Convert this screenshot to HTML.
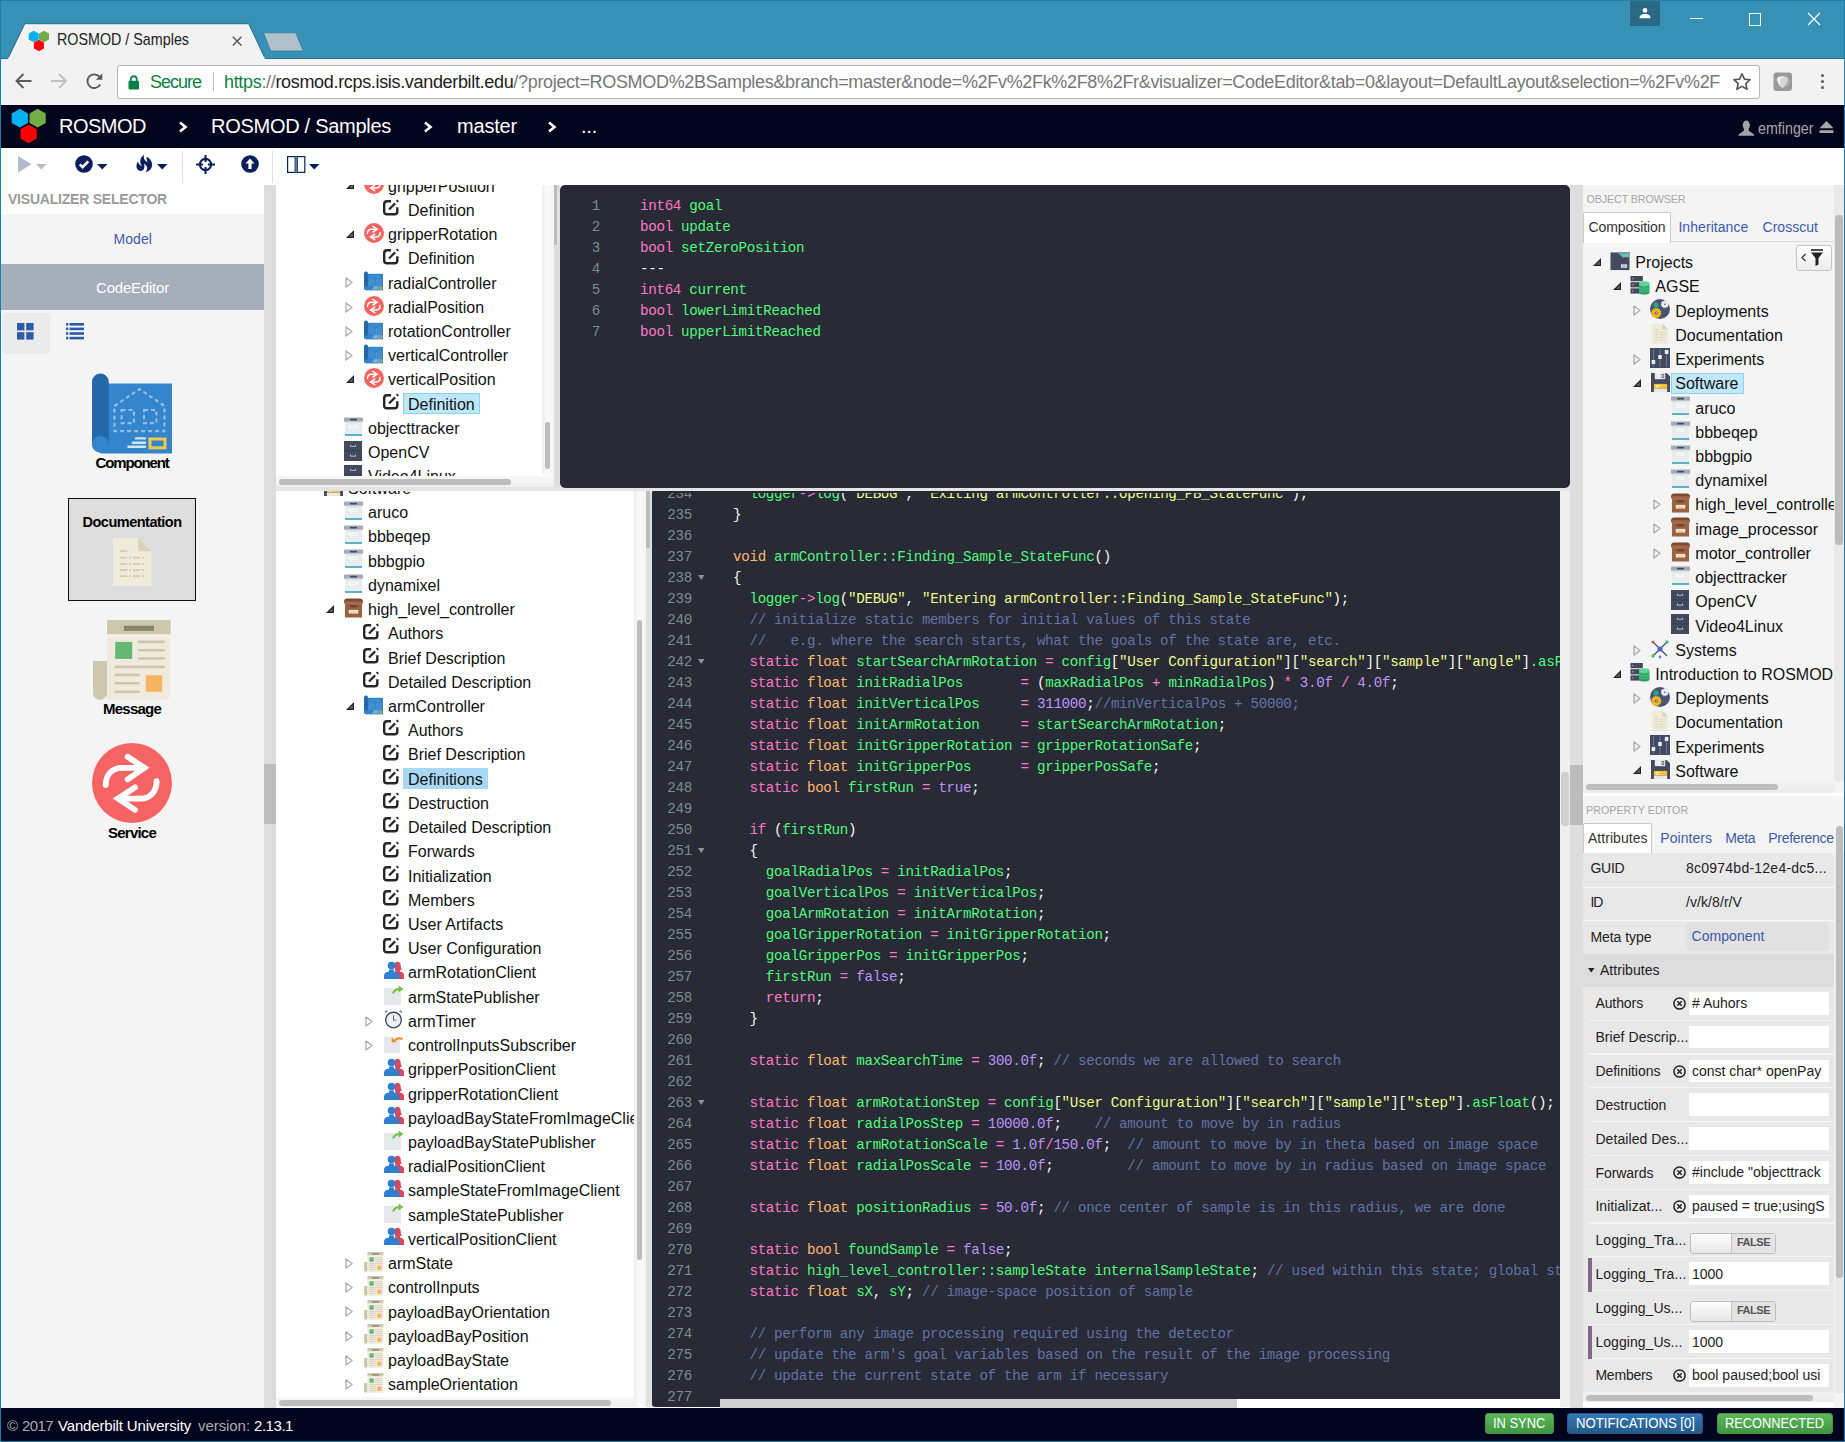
<!DOCTYPE html><html><head><meta charset="utf-8"><style>*{box-sizing:border-box}
body{margin:0;width:1845px;height:1442px;overflow:hidden;position:relative;font-family:"Liberation Sans",sans-serif;background:#fff;color:#000}
.a{position:absolute}
.t{position:absolute;white-space:nowrap}
svg.a{overflow:visible}
</style></head><body>
<svg width="0" height="0" style="position:absolute">
<defs>
<symbol id="svc" viewBox="0 0 20 20"><circle cx="10" cy="10" r="10" fill="#f56363"/><g fill="none" stroke="#fff" stroke-width="1.45" stroke-linecap="round" stroke-linejoin="miter"><path d="M3.42 10.47C3.42 8 5 6.2 7.5 6.2H13"/><path d="M8.9 3.45L13.1 6.2 8.9 9.1"/><path d="M16.15 9.55C16.15 12 14.6 13.9 12.2 13.9H6.8"/><path d="M10.75 11.08L6.5 13.9 10.75 16.7"/></g></symbol>
<symbol id="cmp" viewBox="0 0 20 20"><path d="M2.1 2.4H20V19.9H2.1z" fill="#3585cc"/><rect x="0" y="-.1" width="4.2" height="19.6" rx="2.1" fill="#2468aa"/><circle cx="2.1" cy="17.6" r="2.1" fill="#3585cc"/><path d="M5.6 8L11.9 3.75 18.1 8V14.3H5.6Z" fill="none" stroke="#8fbde8" stroke-width=".55" stroke-dasharray="1 .75"/><rect x="7.4" y="9" width="3.1" height="3.3" fill="none" stroke="#8fbde8" stroke-width=".55" stroke-dasharray="1 .75"/><rect x="13" y="9" width="3.1" height="3.3" fill="none" stroke="#8fbde8" stroke-width=".55" stroke-dasharray="1 .75"/><path d="M11 16.1h2.25M10.2 17.2h3.05M9.1 18.2h4.15" stroke="#d0e6fa" stroke-width=".6" stroke-linecap="round"/><rect x="14.5" y="16.25" width="3.75" height="2.2" fill="none" stroke="#f3c94a" stroke-width=".75"/></symbol>
<symbol id="def" viewBox="0 0 16 16"><path d="M8.3 2.1H4.6C3 2.1 2 3.1 2 4.7v6.8C2 13 3 14 4.6 14h6.8c1.6 0 2.6-1 2.6-2.6V7.6" fill="none" stroke="#262626" stroke-width="2.2"/><path d="M6.4 9.6l5.6-5.6" stroke="#262626" stroke-width="2"/><path d="M13.3 1l1.6 1.6" stroke="#262626" stroke-width="1.7"/></symbol>
<symbol id="pkg" viewBox="0 0 20 20"><rect x="0" y="0" width="20" height="4.6" rx=".6" fill="#a5aab2"/><rect x="6.2" y="1.2" width="7.6" height="2" rx="1" fill="#434a5e"/><rect x="1" y="4.6" width="18" height="13" fill="#e8edef"/><rect x="1" y="4.6" width="18" height=".8" fill="#d5dadd"/><rect x="5.5" y="7.8" width="9" height="3.6" fill="#fbfbfb"/><path d="M7 9.6h6" stroke="#d0d0d0" stroke-width=".5"/><rect x="1" y="17.5" width="18" height="1.8" fill="#40a8ba"/></symbol>
<symbol id="bpkg" viewBox="0 0 20 20"><path d="M.3 1.8Q.8 0 3 0h14q2.2 0 2.7 1.8L20 5H0z" fill="#7b4a2e"/><rect x="0" y="2.6" width="20" height="2.4" fill="#9a6143"/><rect x="1" y="5" width="18" height="15" fill="#9a6143"/><rect x="6" y="7.2" width="8" height="2" fill="#70412a"/><rect x="5" y="12" width="10" height="3.8" fill="#ece6c6"/><path d="M6.5 13.9h7" stroke="#c9c19a" stroke-width=".5"/></symbol>
<symbol id="cab" viewBox="0 0 18 20"><rect x="0" y="0" width="18" height="20" fill="#434a5e"/><path d="M6.5 3.8v1.6h5V3.8M6.5 13.6v1.6h5v-1.6" fill="none" stroke="#d5d8de" stroke-width=".8"/><path d="M0 9.9h18" stroke="#353b4b" stroke-width=".7"/></symbol>
<symbol id="cli" viewBox="0 0 20 20"><path d="M10.2 4.5C10.2 2 11.6.8 13.5.8s3.2 1.2 3.2 3.6c0 1.5.4 3.2 1.3 4.2-.8.5-1.5.6-2 .6v1.4c2.6.6 4 1.6 4 3.2V18h-7z" fill="#d24a63"/><circle cx="7.5" cy="4.6" r="3.8" fill="#2f80cf"/><path d="M5 8.5h5v2c3 .5 5 1.8 5 3.7V18H0v-3.8c0-1.9 2-3.2 5-3.7z" fill="#2f80cf"/></symbol>
<symbol id="pub" viewBox="0 0 20 20"><rect x="0" y="3" width="17" height="17" fill="#e5e9eb"/><path d="M9 8.5c1-3 3.5-4.5 7-4.5" fill="none" stroke="#76c045" stroke-width="2.2"/><path d="M14.5.5l5 3.5-5 3.5z" fill="#76c045"/></symbol>
<symbol id="sub" viewBox="0 0 20 20"><rect x="0" y="3" width="17" height="17" fill="#e5e9eb"/><path d="M19.5 5.5c-3-1.8-6.5-1-8.3 1.5" fill="none" stroke="#f08a1c" stroke-width="2.2"/><path d="M8 3.5v5.2h5.2z" fill="#f08a1c"/></symbol>
<symbol id="tmr" viewBox="0 0 20 20"><circle cx="10" cy="10.6" r="8.2" fill="#eef1f3" stroke="#3a4258" stroke-width="1.4"/><path d="M10 5.5v5.2h3" fill="none" stroke="#3a4258" stroke-width=".9"/><path d="M1 2.5l2.5-1.8M19 2.5l-2.5-1.8" stroke="#6d84c8" stroke-width="1.6"/></symbol>
<symbol id="msg" viewBox="0 0 20 20"><path d="M0 10.1H3.5V18.1a1.75 1.75 0 0 1-3.5 0z" fill="#cdc7ab"/><path d="M3.5 4.4H19.4V18.3a1.5 1.5 0 0 1-1.5 1.5H3.5z" fill="#eeebde"/><rect x="3.5" y="-.1" width="15.9" height="3.6" fill="#cdc7ab"/><rect x="7.7" y="1.3" width="7.55" height="1.3" fill="#8a8570"/><rect x="3.5" y="3.5" width="15.9" height=".9" fill="#f5f1e6"/><rect x="5.55" y="5.35" width="4.25" height="4.25" fill="#63b873"/><rect x="13.2" y="13.7" width="4.1" height="4.1" fill="#f6b463"/><path d="M11.5 5.35h6.2M11.5 7.45h6.2M11.5 9.5h6.2M5.65 11.6h12.05M5.65 13.6h5.75M5.65 15.7h5.75M5.65 17.8h5.75" stroke="#cdc7ab" stroke-width=".65" stroke-linecap="round"/></symbol>
<symbol id="flp" viewBox="0 0 20 20"><path d="M0 0h16.5L20 3.5V20H0z" fill="#434a5e"/><path d="M4 0h11v6.5H4z" fill="#e9ebee"/><rect x="11.2" y="1" width="2.6" height="4.2" fill="#434a5e"/><rect x="11.9" y="1.6" width="1.2" height="3" fill="#e9ebee"/><rect x="3" y="11.5" width="14" height="5" fill="#f0c12e"/><path d="M5 13.3h5M5 14.9h3" stroke="#fff" stroke-width=".9"/><rect x="3" y="16.5" width="14" height="3.5" fill="#e6e8ea"/></symbol>
<symbol id="prj" viewBox="0 0 20 20"><rect x="0" y=".5" width="20" height="18.5" fill="#454c61"/><path d="M7.5 .5H20V5.6H12.6Z" fill="#6cc49c"/><path d="M7.5 .5H20V1.9H8.9Z" fill="#7087c8"/><rect x="11" y="13" width="6.5" height="3.6" fill="#dde4ee"/><rect x="12" y="14.2" width="4.5" height="1.3" fill="#8fa3cf"/></symbol>
<symbol id="srv" viewBox="0 0 20 20"><rect x="0" y="0" width="13" height="5.5" fill="#434a5b"/><rect x="0" y="6.5" width="13" height="5.5" fill="#434a5b"/><rect x="0" y="13" width="13" height="5.5" fill="#434a5b"/><circle cx="2.5" cy="2.7" r=".8" fill="#a6b0c4"/><circle cx="2.5" cy="9.2" r=".8" fill="#a6b0c4"/><circle cx="2.5" cy="15.7" r=".8" fill="#a6b0c4"/><ellipse cx="14.5" cy="17" rx="5.5" ry="2.5" fill="#2e9c63"/><rect x="9" y="8" width="11" height="9" fill="#3fb877"/><ellipse cx="14.5" cy="8" rx="5.5" ry="2.5" fill="#5fd39a"/><path d="M9 11.5q5.5 2 11 0M9 14.5q5.5 2 11 0" fill="none" stroke="#2e9c63" stroke-width=".7"/></symbol>
<symbol id="gear" viewBox="0 0 20 20"><circle cx="10" cy="10" r="10" fill="#4a5470"/><circle cx="14.8" cy="5.2" r="3.3" fill="#e9ecef" stroke="#e9ecef" stroke-width="1.4" stroke-dasharray=".9 .9"/><circle cx="14.8" cy="5.2" r=".8" fill="#4a5470"/><circle cx="6" cy="6" r="2.2" fill="#1fae8f" stroke="#1fae8f" stroke-width="1.4" stroke-dasharray=".9 .9"/><circle cx="6.2" cy="14" r="4.6" fill="#f0b81c" stroke="#f0b81c" stroke-width="1.3" stroke-dasharray="1 1"/><circle cx="6.2" cy="14" r="1.6" fill="#4a5470"/><circle cx="6.2" cy="14" r=".7" fill="#e9ecef"/></symbol>
<symbol id="doc" viewBox="0 0 16 20"><path d="M0 0H10.5L16 5.5V20H0z" fill="#efebdb"/><path d="M10.5 0V5.5H16z" fill="#d8d1b3"/><path d="M2.9 5.5h4M2.9 8.2h10.4M2.9 10.75h10.4M2.9 13.4h10.4M2.9 15.9h10.4" stroke="#d3cca9" stroke-width=".75" stroke-dasharray="3 .8 .8 .8"/></symbol>
<symbol id="exp" viewBox="0 0 20 20"><rect x="0" y="0" width="20" height="20" fill="#434a5e"/><path d="M3.4 1v18M10 1v18M16.6 1v18" stroke="#7487d0" stroke-width=".8"/><rect x="1.6" y="12" width="3.6" height="4" fill="#e8ecef"/><rect x="8.2" y="7" width="3.6" height="4" fill="#e8ecef"/><rect x="14.8" y="2" width="3.6" height="4" fill="#e8ecef"/></symbol>
<symbol id="sysi" viewBox="0 0 20 20"><path d="M3 3l14 14M17 3L3 17" stroke="#434a5b" stroke-width="1.2"/><circle cx="10" cy="10" r="2.6" fill="#4a66c8"/><circle cx="3" cy="3" r="1.5" fill="#e05050"/><circle cx="17" cy="3" r="1.8" fill="#4fc27a"/><circle cx="3" cy="17" r="1.8" fill="#4fc27a"/><circle cx="10" cy="18" r="1.4" fill="#6a7ed0"/></symbol>
<symbol id="tex" viewBox="0 0 8 8"><path d="M8 0v8H0z" fill="#222"/><path d="M6.8 3v3.8H3z" fill="#666"/></symbol>
<symbol id="tcol" viewBox="0 0 8 11"><path d="M1 1l6 4.5L1 10z" fill="none" stroke="#aaa" stroke-width="1.3" stroke-linejoin="round"/></symbol>
</defs></svg>
<div class="a" style="left:0px;top:0px;width:1845px;height:59px;background:#3791b5"></div>
<div class="a" style="left:0px;top:58px;width:1845px;height:1px;background:#24708f"></div>
<svg class="a" style="left:0px;top:0px;" width="320" height="60" viewBox="0 0 320 60"><path d="M7.5 59.5L24.8 23.7H248.7L265.5 59.5" fill="#f2f2f2" stroke="#1f6f90" stroke-width="1"/><rect x="8.5" y="57" width="256" height="3" fill="#f2f2f2"/><path d="M270.7 51L263.5 32.8H295.7L303.3 51Z" fill="#aec0c8" stroke="#2f7fa0" stroke-width=".8"/></svg>
<svg class="a" style="left:26px;top:29px;" width="26" height="24" viewBox="0 0 26 24"><polygon points="12.77,10.40 7.75,13.30 2.73,10.40 2.73,4.60 7.75,1.70 12.77,4.60" fill="#03b0f0"/><polygon points="23.02,10.40 18.00,13.30 12.98,10.40 12.98,4.60 18.00,1.70 23.02,4.60" fill="#70ad47"/><polygon points="17.92,19.40 12.90,22.30 7.88,19.40 7.88,13.60 12.90,10.70 17.92,13.60" fill="#ff0000"/></svg>
<div class="t" style="left:57.00px;top:28.11px;font-size:17px;line-height:24px;color:#222;transform:scaleX(0.8418);transform-origin:0 0;">ROSMOD / Samples</div>
<svg class="a" style="left:232px;top:36px;" width="10" height="10" viewBox="0 0 10 10"><path d="M.8 .8l8.6 8.6M9.4 .8L.8 9.4" stroke="#555" stroke-width="1.4"/></svg>
<div class="a" style="left:1630px;top:1px;width:30px;height:25px;background:#2a6a86"></div>
<svg class="a" style="left:1638px;top:7px;" width="14" height="14" viewBox="0 0 14 14"><circle cx="7" cy="3.4" r="2.3" fill="#fff"/><path d="M1.5 11.2c0-3 2.5-4.2 5.5-4.2s5.5 1.2 5.5 4.2z" fill="#fff"/></svg>
<div class="a" style="left:1690px;top:18px;width:13px;height:1.3px;background:#fff"></div>
<div class="a" style="left:1748.5px;top:13px;width:12.5px;height:12.5px;border:1.2px solid #fff"></div>
<svg class="a" style="left:1807px;top:12px;" width="14" height="14" viewBox="0 0 14 14"><path d="M1 1l12 12M13 1L1 13" stroke="#fff" stroke-width="1.2"/></svg>
<div class="a" style="left:0px;top:59px;width:1845px;height:46px;background:#f2f2f2"></div>
<svg class="a" style="left:14px;top:72px;" width="20" height="18" viewBox="0 0 20 18"><path d="M17.5 9H3M9.5 2L2.5 9l7 7" fill="none" stroke="#5a5a5a" stroke-width="1.9"/></svg>
<svg class="a" style="left:49px;top:72px;" width="20" height="18" viewBox="0 0 20 18"><path d="M2 9h14.5M10 2l7 7-7 7" fill="none" stroke="#c2c2c2" stroke-width="1.9"/></svg>
<svg class="a" style="left:85px;top:72px;" width="20" height="19" viewBox="0 0 20 19"><path d="M15.2 12.5A6.8 6.8 0 1 1 14.6 5" fill="none" stroke="#5a5a5a" stroke-width="1.9"/><path d="M17.3 1.2v6.5h-6.5z" fill="#5a5a5a"/></svg>
<div class="a" style="left:116.5px;top:64.5px;width:1643px;height:34px;background:#fff;border:1px solid #b6b6b6;border-radius:3px"></div>
<svg class="a" style="left:128px;top:75px;" width="12" height="15" viewBox="0 0 12 15"><rect x="0.5" y="5.8" width="10.5" height="8.7" rx="1" fill="#0b8043"/><path d="M2.8 6V4.2a2.95 2.95 0 0 1 5.9 0V6" fill="none" stroke="#0b8043" stroke-width="1.8"/></svg>
<div class="t" style="left:150.00px;top:69.76px;font-size:18px;line-height:25px;color:#0b8043;letter-spacing:-1.006px;">Secure</div>
<div class="a" style="left:213px;top:72px;width:1px;height:19px;background:#bbb"></div>
<div class="t" style="left:224.00px;top:69.76px;font-size:18px;line-height:25px;color:#777;letter-spacing:-0.329px;"><span style="color:#0b8043">https</span><span style="color:#777">://</span><span style="color:#222">rosmod.rcps.isis.vanderbilt.edu</span><span style="color:#777">/?project=ROSMOD%2BSamples&amp;branch=master&amp;node=%2Fv%2Fk%2F8%2Fr&amp;visualizer=CodeEditor&amp;tab=0&amp;layout=DefaultLayout&amp;selection=%2Fv%2F</span></div>
<svg class="a" style="left:1732px;top:72px;" width="20" height="20" viewBox="0 0 20 20"><path d="M10 1.8l2.4 5.3 5.8.6-4.4 3.9 1.3 5.7L10 14.4l-5.1 2.9 1.3-5.7L1.8 7.7l5.8-.6z" fill="none" stroke="#555" stroke-width="1.6" stroke-linejoin="round"/></svg>
<svg class="a" style="left:1773px;top:72px;" width="20" height="20" viewBox="0 0 20 20"><rect x="0.5" y="0.5" width="18.5" height="18.5" rx="3" fill="#9a9a9a"/><path d="M4 6c2-2.5 9-2.5 11 0 0 5-3 8-5.5 10C7 14 4 11 4 6z" fill="#eee"/><circle cx="12" cy="10" r="5" fill="#bbb" opacity=".5"/></svg>
<div class="a" style="left:1820.5px;top:73.9px;width:3.3px;height:3.3px;background:#5a5a5a;border-radius:50%"></div>
<div class="a" style="left:1820.5px;top:79.9px;width:3.3px;height:3.3px;background:#5a5a5a;border-radius:50%"></div>
<div class="a" style="left:1820.5px;top:85.9px;width:3.3px;height:3.3px;background:#5a5a5a;border-radius:50%"></div>
<div class="a" style="left:0px;top:105px;width:1845px;height:42.5px;background:#03041e"></div>
<div class="a" style="left:0px;top:146.5px;width:1845px;height:1px;background:#000"></div>
<svg class="a" style="left:9px;top:107px;" width="42" height="40" viewBox="0 0 42 40"><polygon points="18.94,15.90 10.80,20.60 2.66,15.90 2.66,6.50 10.80,1.80 18.94,6.50" fill="#03b0f0"/><polygon points="36.74,15.90 28.60,20.60 20.46,15.90 20.46,6.50 28.60,1.80 36.74,6.50" fill="#70ad47"/><polygon points="27.74,31.60 19.60,36.30 11.46,31.60 11.46,22.20 19.60,17.50 27.74,22.20" fill="#ff0000"/></svg>
<div class="t" style="left:59.00px;top:112.07px;font-size:20px;line-height:28px;color:#fff;letter-spacing:-0.500px;">ROSMOD</div>
<svg class="a" style="left:178px;top:121px;" width="10" height="12" viewBox="0 0 10 12"><path d="M2 1.5l5.5 4.5L2 10.5" fill="none" stroke="#fff" stroke-width="2.6"/></svg>
<svg class="a" style="left:423px;top:121px;" width="10" height="12" viewBox="0 0 10 12"><path d="M2 1.5l5.5 4.5L2 10.5" fill="none" stroke="#fff" stroke-width="2.6"/></svg>
<svg class="a" style="left:547px;top:121px;" width="10" height="12" viewBox="0 0 10 12"><path d="M2 1.5l5.5 4.5L2 10.5" fill="none" stroke="#fff" stroke-width="2.6"/></svg>
<div class="t" style="left:211.00px;top:112.07px;font-size:20px;line-height:28px;color:#fff;letter-spacing:-0.280px;">ROSMOD / Samples</div>
<div class="t" style="left:457.00px;top:112.07px;font-size:20px;line-height:28px;color:#fff;letter-spacing:-0.188px;">master</div>
<div class="t" style="left:581.00px;top:112.07px;font-size:20px;line-height:28px;color:#fff;letter-spacing:-0.223px;">...</div>
<svg class="a" style="left:1738px;top:119.5px;" width="17" height="16" viewBox="0 0 17 16"><ellipse cx="8.3" cy="5.2" rx="3.6" ry="4.6" fill="#a3a3a3"/><path d="M5.8 8.8h5v2l5.4 3.6v1.3H.5v-1.3l5.3-3.6z" fill="#a3a3a3"/></svg>
<div class="t" style="left:1758.30px;top:117.11px;font-size:17px;line-height:24px;color:#a8a8a8;transform:scaleX(0.8391);transform-origin:0 0;">emfinger</div>
<svg class="a" style="left:1818.5px;top:121px;" width="15" height="13" viewBox="0 0 15 13"><path d="M7.5 0L14.5 7.2H.5z" fill="#a8a8a8"/><rect x=".5" y="9.2" width="14" height="2.8" rx=".6" fill="#a8a8a8"/></svg>
<div class="a" style="left:0px;top:147.5px;width:1845px;height:37.5px;background:#fff"></div>
<svg class="a" style="left:18px;top:156px;" width="14" height="17" viewBox="0 0 14 17"><path d="M0 0L13.5 8.2 0 16.5z" fill="#b3bbcb"/></svg>
<svg class="a" style="left:36px;top:164px;" width="11" height="6" viewBox="0 0 11 6"><path d="M0 0h10.5L5.25 5.5z" fill="#b3bbcb"/></svg>
<svg class="a" style="left:75px;top:155px;" width="18" height="18" viewBox="0 0 18 18"><circle cx="9" cy="9" r="8.8" fill="#0b1f5c"/><path d="M4.8 9.3l2.8 2.8 5.6-5.8" fill="none" stroke="#fff" stroke-width="2.6"/></svg>
<svg class="a" style="left:97px;top:164px;" width="11" height="6" viewBox="0 0 11 6"><path d="M0 0h10.5L5.25 5.5z" fill="#0b1f5c"/></svg>
<svg class="a" style="left:135.6px;top:154.3px;" width="17" height="19" viewBox="0 0 17 19"><path d="M7.96 .58C5.5 2.5 3.8 5.5 4.3 8.5 4.6 10.2 5.5 11.3 6.2 11.9 4.5 11.8 2.8 10.5 1.94 7.57 .2 10-.2 13.5 1.6 15.6 3.2 17.5 6.2 17.6 7.6 15.6 8.6 14 8.5 11.5 8.1 9.8 9.8 11 11.3 12.5 11.2 14.2 11.1 16 10.2 17.4 9.1 18.1 13.5 17.5 16.3 14.5 16.1 10.3 15.9 6.8 13.5 4 10.7 2.7 10.2 4.5 11 6.8 11.8 8.4 10 7.5 8.4 6.2 7.9 4.3 7.6 2.9 7.7 1.6 7.96 .58Z" fill="#0b1f5c"/></svg>
<svg class="a" style="left:157px;top:164px;" width="11" height="6" viewBox="0 0 11 6"><path d="M0 0h10.5L5.25 5.5z" fill="#0b1f5c"/></svg>
<div class="a" style="left:181.5px;top:151px;width:1px;height:31.5px;background:#dde2ea"></div>
<svg class="a" style="left:196px;top:155px;" width="19" height="19" viewBox="0 0 19 19"><circle cx="9.5" cy="9.5" r="5.6" fill="none" stroke="#0b1f5c" stroke-width="2.1"/><path d="M9.5 0v7M9.5 12v7M0 9.5h7M12 9.5h7" stroke="#0b1f5c" stroke-width="2.1"/></svg>
<svg class="a" style="left:241px;top:155px;" width="18" height="18" viewBox="0 0 18 18"><circle cx="9" cy="9" r="8.8" fill="#0b1f5c"/><path d="M9 3.5L13.5 8.5H10.6V14H7.4V8.5H4.5z" fill="#fff"/></svg>
<div class="a" style="left:272px;top:151px;width:1px;height:31.5px;background:#dde2ea"></div>
<svg class="a" style="left:286.8px;top:155.7px;" width="19" height="17" viewBox="0 0 19 17"><rect x=".6" y=".6" width="7.6" height="15.8" fill="none" stroke="#0b1f5c" stroke-width="1.2"/><rect x="10.2" y=".6" width="7.6" height="15.8" fill="none" stroke="#0b1f5c" stroke-width="1.2"/><path d="M9.2 0v17" stroke="#4a7fa8" stroke-width="1.6"/></svg>
<svg class="a" style="left:309px;top:164px;" width="11" height="6" viewBox="0 0 11 6"><path d="M0 0h10.5L5.25 5.5z" fill="#0b1f5c"/></svg>
<div class="a" style="left:0px;top:1407.5px;width:1845px;height:35px;background:#03041e"></div>
<div class="t" style="left:7.00px;top:1415.30px;font-size:15px;line-height:21px;color:#aaa;letter-spacing:1.948px;">©</div>
<div class="t" style="left:22.00px;top:1415.30px;font-size:15px;line-height:21px;color:#aaa;letter-spacing:-0.593px;">2017</div>
<div class="t" style="left:58.00px;top:1415.30px;font-size:15px;line-height:21px;color:#fff;letter-spacing:-0.164px;">Vanderbilt University</div>
<div class="t" style="left:198.00px;top:1415.30px;font-size:15px;line-height:21px;color:#aaa;letter-spacing:-0.065px;">version:</div>
<div class="t" style="left:254.00px;top:1415.30px;font-size:15px;line-height:21px;color:#fff;letter-spacing:-0.451px;">2.13.1</div>
<div class="a" style="left:1484.6px;top:1413.4px;width:69.4px;height:20.4px;background:linear-gradient(#5cb85c,#419641);border:1px solid #419641;border-radius:3px"></div>
<div class="t" style="left:1493.30px;top:1412.20px;font-size:15px;line-height:21px;color:#fff;transform:scaleX(0.8612);transform-origin:0 0;">IN SYNC</div>
<div class="a" style="left:1567.4px;top:1413.4px;width:136px;height:20.4px;background:linear-gradient(#337ab7,#265a88);border:1px solid #265a88;border-radius:3px"></div>
<div class="t" style="left:1576.10px;top:1412.20px;font-size:15px;line-height:21px;color:#fff;transform:scaleX(0.8778);transform-origin:0 0;">NOTIFICATIONS [0]</div>
<div class="a" style="left:1716.5px;top:1413.4px;width:116px;height:20.4px;background:linear-gradient(#5cb85c,#419641);border:1px solid #419641;border-radius:3px"></div>
<div class="t" style="left:1725.20px;top:1412.20px;font-size:15px;line-height:21px;color:#fff;transform:scaleX(0.8546);transform-origin:0 0;">RECONNECTED</div>
<div class="a" style="left:0px;top:185px;width:264px;height:1222.5px;background:#f4f4f4"></div>
<div class="a" style="left:0px;top:185px;width:264px;height:29px;background:#fff"></div>
<div class="t" style="left:8.00px;top:189.15px;font-size:14px;line-height:20px;color:#9a9a9a;font-weight:bold;letter-spacing:-0.216px;">VISUALIZER SELECTOR</div>
<div class="t" style="left:113.50px;top:228.85px;font-size:14px;line-height:20px;color:#3f5ba9;letter-spacing:0.073px;">Model</div>
<div class="a" style="left:0px;top:264px;width:264px;height:46px;background:#a6aebc"></div>
<div class="t" style="left:96.00px;top:277.30px;font-size:15px;line-height:21px;color:#fff;letter-spacing:-0.205px;">CodeEditor</div>
<div class="a" style="left:2.5px;top:313px;width:47.5px;height:40.5px;background:#ebebeb;border-radius:3px"></div>
<svg class="a" style="left:17px;top:323px;" width="17" height="17" viewBox="0 0 17 17"><rect x="0" y="0" width="7.4" height="7.4" fill="#2d5aa9"/><rect x="9.2" y="0" width="7.4" height="7.4" fill="#2d5aa9"/><rect x="0" y="9.2" width="7.4" height="7.4" fill="#2d5aa9"/><rect x="9.2" y="9.2" width="7.4" height="7.4" fill="#2d5aa9"/></svg>
<svg class="a" style="left:66px;top:323px;" width="19" height="17" viewBox="0 0 19 17"><rect x="0" y="0" width="2.3" height="2.6" fill="#2d5aa9"/><rect x="0" y="4.6" width="2.3" height="2.6" fill="#2d5aa9"/><rect x="0" y="9.2" width="2.3" height="2.6" fill="#2d5aa9"/><rect x="0" y="13.8" width="2.3" height="2.6" fill="#2d5aa9"/><rect x="3.5" y="0" width="14.5" height="2.6" fill="#2d5aa9"/><rect x="3.5" y="4.6" width="14.5" height="2.6" fill="#2d5aa9"/><rect x="3.5" y="9.2" width="14.5" height="2.6" fill="#2d5aa9"/><rect x="3.5" y="13.8" width="14.5" height="2.6" fill="#2d5aa9"/></svg>
<svg class="a" style="left:92px;top:373px;" width="80" height="82"><use href="#cmp"/></svg>
<div class="t" style="left:95.50px;top:452.00px;font-size:15px;line-height:21px;color:#000;font-weight:bold;letter-spacing:-1.147px;">Component</div>
<div class="a" style="left:68px;top:498px;width:128px;height:103px;background:#dedede;border:1.3px solid #111"></div>
<div class="t" style="left:82.50px;top:511.98px;font-size:14.5px;line-height:20px;color:#000;font-weight:bold;letter-spacing:-0.502px;">Documentation</div>
<svg class="a" style="left:112.5px;top:536.6px;" width="38.5" height="50"><use href="#doc"/></svg>
<svg class="a" style="left:93px;top:620px;" width="80" height="81"><use href="#msg"/></svg>
<div class="t" style="left:103.00px;top:698.30px;font-size:15px;line-height:21px;color:#000;font-weight:bold;letter-spacing:-0.767px;">Message</div>
<svg class="a" style="left:92px;top:742.5px;" width="80" height="80"><use href="#svc"/></svg>
<div class="t" style="left:108.00px;top:822.30px;font-size:15px;line-height:21px;color:#000;font-weight:bold;letter-spacing:-0.769px;">Service</div>
<div class="a" style="left:264px;top:185px;width:12px;height:1222.5px;background:#dcdcdc"></div>
<div class="a" style="left:264px;top:764px;width:11.5px;height:60px;background:#bcbcbc"></div>
<div class="a" style="left:276px;top:185px;width:266px;height:291px;overflow:hidden;background:#fff">
<svg class="a" style="left:69.7px;top:-3.7999999999999945px;" width="8" height="8"><use href="#tex"/></svg>
<svg class="a" style="left:87.5px;top:-10.599999999999994px;" width="20" height="20"><use href="#svc"/></svg>
<div class="t" style="left:112.00px;top:-9.34px;font-size:16px;line-height:22px;color:#111;">gripperPosition</div>
<svg class="a" style="left:105.8px;top:14.072000000000013px;" width="17.5" height="17.5"><use href="#def"/></svg>
<div class="t" style="left:132.00px;top:14.88px;font-size:16px;line-height:22px;color:#111;">Definition</div>
<svg class="a" style="left:69.7px;top:44.64399999999999px;" width="8" height="8"><use href="#tex"/></svg>
<svg class="a" style="left:87.5px;top:37.843999999999994px;" width="20" height="20"><use href="#svc"/></svg>
<div class="t" style="left:112.00px;top:39.10px;font-size:16px;line-height:22px;color:#111;">gripperRotation</div>
<svg class="a" style="left:105.8px;top:62.516000000000034px;" width="17.5" height="17.5"><use href="#def"/></svg>
<div class="t" style="left:132.00px;top:63.32px;font-size:16px;line-height:22px;color:#111;">Definition</div>
<svg class="a" style="left:69.4px;top:92.28800000000001px;" width="8" height="11"><use href="#tcol"/></svg>
<svg class="a" style="left:87.5px;top:86.28800000000001px;" width="19" height="20"><use href="#cmp"/></svg>
<div class="t" style="left:112.00px;top:87.54px;font-size:16px;line-height:22px;color:#111;">radialController</div>
<svg class="a" style="left:69.4px;top:116.50999999999999px;" width="8" height="11"><use href="#tcol"/></svg>
<svg class="a" style="left:87.5px;top:110.50999999999999px;" width="20" height="20"><use href="#svc"/></svg>
<div class="t" style="left:112.00px;top:111.77px;font-size:16px;line-height:22px;color:#111;">radialPosition</div>
<svg class="a" style="left:69.4px;top:140.73199999999997px;" width="8" height="11"><use href="#tcol"/></svg>
<svg class="a" style="left:87.5px;top:134.73199999999997px;" width="19" height="20"><use href="#cmp"/></svg>
<div class="t" style="left:112.00px;top:135.99px;font-size:16px;line-height:22px;color:#111;">rotationController</div>
<svg class="a" style="left:69.4px;top:164.954px;" width="8" height="11"><use href="#tcol"/></svg>
<svg class="a" style="left:87.5px;top:158.954px;" width="19" height="20"><use href="#cmp"/></svg>
<div class="t" style="left:112.00px;top:160.21px;font-size:16px;line-height:22px;color:#111;">verticalController</div>
<svg class="a" style="left:69.7px;top:189.97600000000006px;" width="8" height="8"><use href="#tex"/></svg>
<svg class="a" style="left:87.5px;top:183.17600000000004px;" width="20" height="20"><use href="#svc"/></svg>
<div class="t" style="left:112.00px;top:184.43px;font-size:16px;line-height:22px;color:#111;">verticalPosition</div>
<svg class="a" style="left:105.8px;top:207.848px;" width="17.5" height="17.5"><use href="#def"/></svg>
<div class="a" style="left:127.4px;top:207.79800000000003px;width:76.905px;height:21px;background:#bde8fb;border:1px solid #88cff0"></div>
<div class="t" style="left:132.00px;top:208.65px;font-size:16px;line-height:22px;color:#111;">Definition</div>
<svg class="a" style="left:68px;top:231.62px;" width="19" height="20"><use href="#pkg"/></svg>
<div class="t" style="left:92.00px;top:232.88px;font-size:16px;line-height:22px;color:#111;">objecttracker</div>
<svg class="a" style="left:68px;top:255.84199999999998px;" width="18" height="20"><use href="#cab"/></svg>
<div class="t" style="left:92.00px;top:257.10px;font-size:16px;line-height:22px;color:#111;">OpenCV</div>
<svg class="a" style="left:68px;top:280.06399999999996px;" width="18" height="20"><use href="#cab"/></svg>
<div class="t" style="left:92.00px;top:281.32px;font-size:16px;line-height:22px;color:#111;">Video4Linux</div>
</div>
<div class="a" style="left:276px;top:476px;width:278px;height:11.5px;background:linear-gradient(#f7f7f7,#eeeeee)"></div>
<div class="a" style="left:279px;top:478.8px;width:232px;height:6px;background:#bdbdbd;border-radius:3px"></div>
<div class="a" style="left:542px;top:185px;width:12px;height:290px;background:linear-gradient(90deg,#eeeeee,#fafafa 40%,#f4f4f4)"></div>
<div class="a" style="left:544.5px;top:422px;width:5.5px;height:47px;background:#bdbdbd;border-radius:3px"></div>
<div class="a" style="left:554px;top:185px;width:6px;height:302.5px;background:#dedede"></div>
<div class="a" style="left:554px;top:185px;width:3.2px;height:59.7px;background:#bcbcbc"></div>
<div class="a" style="left:276px;top:491.3px;width:358px;height:905.5px;overflow:hidden;background:#fff">
<svg class="a" style="left:47.5px;top:-14.0px;" width="19" height="19"><use href="#flp"/></svg>
<div class="t" style="left:72.00px;top:-13.24px;font-size:16px;line-height:22px;color:#111;">Software</div>
<svg class="a" style="left:68px;top:9.72199999999998px;" width="19" height="20"><use href="#pkg"/></svg>
<div class="t" style="left:92.00px;top:10.98px;font-size:16px;line-height:22px;color:#111;">aruco</div>
<svg class="a" style="left:68px;top:33.94400000000002px;" width="19" height="20"><use href="#pkg"/></svg>
<div class="t" style="left:92.00px;top:35.20px;font-size:16px;line-height:22px;color:#111;">bbbeqep</div>
<svg class="a" style="left:68px;top:58.166px;" width="19" height="20"><use href="#pkg"/></svg>
<div class="t" style="left:92.00px;top:59.42px;font-size:16px;line-height:22px;color:#111;">bbbgpio</div>
<svg class="a" style="left:68px;top:82.38799999999998px;" width="19" height="20"><use href="#pkg"/></svg>
<div class="t" style="left:92.00px;top:83.64px;font-size:16px;line-height:22px;color:#111;">dynamixel</div>
<svg class="a" style="left:49.7px;top:113.41000000000007px;" width="8" height="8"><use href="#tex"/></svg>
<svg class="a" style="left:68px;top:106.61000000000007px;" width="19" height="20"><use href="#bpkg"/></svg>
<div class="t" style="left:92.00px;top:107.87px;font-size:16px;line-height:22px;color:#111;">high_level_controller</div>
<svg class="a" style="left:85.8px;top:131.28200000000004px;" width="17.5" height="17.5"><use href="#def"/></svg>
<div class="t" style="left:112.00px;top:132.09px;font-size:16px;line-height:22px;color:#111;">Authors</div>
<svg class="a" style="left:85.8px;top:155.50400000000002px;" width="17.5" height="17.5"><use href="#def"/></svg>
<div class="t" style="left:112.00px;top:156.31px;font-size:16px;line-height:22px;color:#111;">Brief Description</div>
<svg class="a" style="left:85.8px;top:179.726px;" width="17.5" height="17.5"><use href="#def"/></svg>
<div class="t" style="left:112.00px;top:180.53px;font-size:16px;line-height:22px;color:#111;">Detailed Description</div>
<svg class="a" style="left:69.7px;top:210.298px;" width="8" height="8"><use href="#tex"/></svg>
<svg class="a" style="left:87.5px;top:203.498px;" width="19" height="20"><use href="#cmp"/></svg>
<div class="t" style="left:112.00px;top:204.75px;font-size:16px;line-height:22px;color:#111;">armController</div>
<svg class="a" style="left:105.8px;top:228.16999999999996px;" width="17.5" height="17.5"><use href="#def"/></svg>
<div class="t" style="left:132.00px;top:228.98px;font-size:16px;line-height:22px;color:#111;">Authors</div>
<svg class="a" style="left:105.8px;top:252.39199999999994px;" width="17.5" height="17.5"><use href="#def"/></svg>
<div class="t" style="left:132.00px;top:253.20px;font-size:16px;line-height:22px;color:#111;">Brief Description</div>
<svg class="a" style="left:105.8px;top:276.6139999999999px;" width="17.5" height="17.5"><use href="#def"/></svg>
<div class="a" style="left:127.4px;top:276.5639999999999px;width:84.905px;height:21px;background:#a8d8f4;border:1px solid #a8d8f4"></div>
<div class="t" style="left:132.00px;top:277.42px;font-size:16px;line-height:22px;color:#111;">Definitions</div>
<svg class="a" style="left:105.8px;top:300.836px;" width="17.5" height="17.5"><use href="#def"/></svg>
<div class="t" style="left:132.00px;top:301.64px;font-size:16px;line-height:22px;color:#111;">Destruction</div>
<svg class="a" style="left:105.8px;top:325.058px;" width="17.5" height="17.5"><use href="#def"/></svg>
<div class="t" style="left:132.00px;top:325.86px;font-size:16px;line-height:22px;color:#111;">Detailed Description</div>
<svg class="a" style="left:105.8px;top:349.2800000000001px;" width="17.5" height="17.5"><use href="#def"/></svg>
<div class="t" style="left:132.00px;top:350.09px;font-size:16px;line-height:22px;color:#111;">Forwards</div>
<svg class="a" style="left:105.8px;top:373.50200000000007px;" width="17.5" height="17.5"><use href="#def"/></svg>
<div class="t" style="left:132.00px;top:374.31px;font-size:16px;line-height:22px;color:#111;">Initialization</div>
<svg class="a" style="left:105.8px;top:397.72400000000005px;" width="17.5" height="17.5"><use href="#def"/></svg>
<div class="t" style="left:132.00px;top:398.53px;font-size:16px;line-height:22px;color:#111;">Members</div>
<svg class="a" style="left:105.8px;top:421.946px;" width="17.5" height="17.5"><use href="#def"/></svg>
<div class="t" style="left:132.00px;top:422.75px;font-size:16px;line-height:22px;color:#111;">User Artifacts</div>
<svg class="a" style="left:105.8px;top:446.168px;" width="17.5" height="17.5"><use href="#def"/></svg>
<div class="t" style="left:132.00px;top:446.97px;font-size:16px;line-height:22px;color:#111;">User Configuration</div>
<svg class="a" style="left:107.5px;top:469.44px;" width="20" height="20"><use href="#cli"/></svg>
<div class="t" style="left:132.00px;top:471.20px;font-size:16px;line-height:22px;color:#111;">armRotationClient</div>
<svg class="a" style="left:107.5px;top:493.36199999999997px;" width="20" height="20"><use href="#pub"/></svg>
<div class="t" style="left:132.00px;top:495.42px;font-size:16px;line-height:22px;color:#111;">armStatePublisher</div>
<svg class="a" style="left:89.4px;top:524.384px;" width="8" height="11"><use href="#tcol"/></svg>
<svg class="a" style="left:107.5px;top:518.884px;" width="19" height="19"><use href="#tmr"/></svg>
<div class="t" style="left:132.00px;top:519.64px;font-size:16px;line-height:22px;color:#111;">armTimer</div>
<svg class="a" style="left:89.4px;top:548.606px;" width="8" height="11"><use href="#tcol"/></svg>
<svg class="a" style="left:107.5px;top:543.106px;" width="19" height="19"><use href="#sub"/></svg>
<div class="t" style="left:132.00px;top:543.86px;font-size:16px;line-height:22px;color:#111;">controlInputsSubscriber</div>
<svg class="a" style="left:107.5px;top:566.328px;" width="20" height="20"><use href="#cli"/></svg>
<div class="t" style="left:132.00px;top:568.08px;font-size:16px;line-height:22px;color:#111;">gripperPositionClient</div>
<svg class="a" style="left:107.5px;top:590.5500000000002px;" width="20" height="20"><use href="#cli"/></svg>
<div class="t" style="left:132.00px;top:592.31px;font-size:16px;line-height:22px;color:#111;">gripperRotationClient</div>
<svg class="a" style="left:107.5px;top:614.7720000000002px;" width="20" height="20"><use href="#cli"/></svg>
<div class="t" style="left:132.00px;top:616.53px;font-size:16px;line-height:22px;color:#111;">payloadBayStateFromImageClient</div>
<svg class="a" style="left:107.5px;top:638.6940000000002px;" width="20" height="20"><use href="#pub"/></svg>
<div class="t" style="left:132.00px;top:640.75px;font-size:16px;line-height:22px;color:#111;">payloadBayStatePublisher</div>
<svg class="a" style="left:107.5px;top:663.2160000000001px;" width="20" height="20"><use href="#cli"/></svg>
<div class="t" style="left:132.00px;top:664.97px;font-size:16px;line-height:22px;color:#111;">radialPositionClient</div>
<svg class="a" style="left:107.5px;top:687.4380000000001px;" width="20" height="20"><use href="#cli"/></svg>
<div class="t" style="left:132.00px;top:689.19px;font-size:16px;line-height:22px;color:#111;">sampleStateFromImageClient</div>
<svg class="a" style="left:107.5px;top:711.3600000000001px;" width="20" height="20"><use href="#pub"/></svg>
<div class="t" style="left:132.00px;top:713.42px;font-size:16px;line-height:22px;color:#111;">sampleStatePublisher</div>
<svg class="a" style="left:107.5px;top:735.8820000000001px;" width="20" height="20"><use href="#cli"/></svg>
<div class="t" style="left:132.00px;top:737.64px;font-size:16px;line-height:22px;color:#111;">verticalPositionClient</div>
<svg class="a" style="left:69.4px;top:766.604px;" width="8" height="11"><use href="#tcol"/></svg>
<svg class="a" style="left:88px;top:760.3040000000001px;" width="20" height="20"><use href="#msg"/></svg>
<div class="t" style="left:112.00px;top:761.86px;font-size:16px;line-height:22px;color:#111;">armState</div>
<svg class="a" style="left:69.4px;top:790.826px;" width="8" height="11"><use href="#tcol"/></svg>
<svg class="a" style="left:88px;top:784.5260000000001px;" width="20" height="20"><use href="#msg"/></svg>
<div class="t" style="left:112.00px;top:786.08px;font-size:16px;line-height:22px;color:#111;">controlInputs</div>
<svg class="a" style="left:69.4px;top:815.048px;" width="8" height="11"><use href="#tcol"/></svg>
<svg class="a" style="left:88px;top:808.748px;" width="20" height="20"><use href="#msg"/></svg>
<div class="t" style="left:112.00px;top:810.30px;font-size:16px;line-height:22px;color:#111;">payloadBayOrientation</div>
<svg class="a" style="left:69.4px;top:839.2700000000002px;" width="8" height="11"><use href="#tcol"/></svg>
<svg class="a" style="left:88px;top:832.9700000000003px;" width="20" height="20"><use href="#msg"/></svg>
<div class="t" style="left:112.00px;top:834.53px;font-size:16px;line-height:22px;color:#111;">payloadBayPosition</div>
<svg class="a" style="left:69.4px;top:863.4920000000002px;" width="8" height="11"><use href="#tcol"/></svg>
<svg class="a" style="left:88px;top:857.1920000000002px;" width="20" height="20"><use href="#msg"/></svg>
<div class="t" style="left:112.00px;top:858.75px;font-size:16px;line-height:22px;color:#111;">payloadBayState</div>
<svg class="a" style="left:69.4px;top:887.7140000000002px;" width="8" height="11"><use href="#tcol"/></svg>
<svg class="a" style="left:88px;top:881.4140000000002px;" width="20" height="20"><use href="#msg"/></svg>
<div class="t" style="left:112.00px;top:882.97px;font-size:16px;line-height:22px;color:#111;">sampleOrientation</div>
</div>
<div class="a" style="left:276px;top:1396.8px;width:358px;height:10.7px;background:linear-gradient(#f7f7f7,#eeeeee)"></div>
<div class="a" style="left:279px;top:1399.8px;width:332px;height:6px;background:#bdbdbd;border-radius:3px"></div>
<div class="a" style="left:634px;top:491.3px;width:12px;height:916px;background:linear-gradient(90deg,#eeeeee,#fafafa 40%,#f4f4f4)"></div>
<div class="a" style="left:636.5px;top:620px;width:5.5px;height:640px;background:#bdbdbd;border-radius:3px"></div>
<div class="a" style="left:646px;top:491.3px;width:6px;height:916px;background:#e0e0e0"></div>
<div class="a" style="left:646px;top:491.3px;width:3.8px;height:56.3px;background:#bcbcbc"></div>
<div class="a" style="left:276px;top:487.4px;width:1294px;height:3.9px;background:#e4e4e4"></div>
<div class="a" style="left:560px;top:185px;width:1010px;height:302.7px;background:#282a36;border-radius:5px;overflow:hidden">
<div class="t" style="left:31.78px;top:11.22px;font-size:14.2px;line-height:20px;color:#7c8e8c;font-family:'Liberation Mono',monospace;white-space:pre;letter-spacing:-0.301px;">1</div>
<div class="t" style="left:80.00px;top:11.22px;font-size:14.2px;line-height:20px;color:#f8f8f2;font-family:'Liberation Mono',monospace;white-space:pre;letter-spacing:-0.301px;"><span style="color:#ff79c6">int64</span><span style="color:#f8f8f2"> </span><span style="color:#50fa7b">goal</span></div>
<div class="t" style="left:31.78px;top:32.22px;font-size:14.2px;line-height:20px;color:#7c8e8c;font-family:'Liberation Mono',monospace;white-space:pre;letter-spacing:-0.301px;">2</div>
<div class="t" style="left:80.00px;top:32.22px;font-size:14.2px;line-height:20px;color:#f8f8f2;font-family:'Liberation Mono',monospace;white-space:pre;letter-spacing:-0.301px;"><span style="color:#ff79c6">bool</span><span style="color:#f8f8f2"> </span><span style="color:#50fa7b">update</span></div>
<div class="t" style="left:31.78px;top:53.22px;font-size:14.2px;line-height:20px;color:#7c8e8c;font-family:'Liberation Mono',monospace;white-space:pre;letter-spacing:-0.301px;">3</div>
<div class="t" style="left:80.00px;top:53.22px;font-size:14.2px;line-height:20px;color:#f8f8f2;font-family:'Liberation Mono',monospace;white-space:pre;letter-spacing:-0.301px;"><span style="color:#ff79c6">bool</span><span style="color:#f8f8f2"> </span><span style="color:#50fa7b">setZeroPosition</span></div>
<div class="t" style="left:31.78px;top:74.22px;font-size:14.2px;line-height:20px;color:#7c8e8c;font-family:'Liberation Mono',monospace;white-space:pre;letter-spacing:-0.301px;">4</div>
<div class="t" style="left:80.00px;top:74.22px;font-size:14.2px;line-height:20px;color:#f8f8f2;font-family:'Liberation Mono',monospace;white-space:pre;letter-spacing:-0.301px;"><span style="color:#f8f8f2">---</span></div>
<div class="t" style="left:31.78px;top:95.22px;font-size:14.2px;line-height:20px;color:#7c8e8c;font-family:'Liberation Mono',monospace;white-space:pre;letter-spacing:-0.301px;">5</div>
<div class="t" style="left:80.00px;top:95.22px;font-size:14.2px;line-height:20px;color:#f8f8f2;font-family:'Liberation Mono',monospace;white-space:pre;letter-spacing:-0.301px;"><span style="color:#ff79c6">int64</span><span style="color:#f8f8f2"> </span><span style="color:#50fa7b">current</span></div>
<div class="t" style="left:31.78px;top:116.22px;font-size:14.2px;line-height:20px;color:#7c8e8c;font-family:'Liberation Mono',monospace;white-space:pre;letter-spacing:-0.301px;">6</div>
<div class="t" style="left:80.00px;top:116.22px;font-size:14.2px;line-height:20px;color:#f8f8f2;font-family:'Liberation Mono',monospace;white-space:pre;letter-spacing:-0.301px;"><span style="color:#ff79c6">bool</span><span style="color:#f8f8f2"> </span><span style="color:#50fa7b">lowerLimitReached</span></div>
<div class="t" style="left:31.78px;top:137.22px;font-size:14.2px;line-height:20px;color:#7c8e8c;font-family:'Liberation Mono',monospace;white-space:pre;letter-spacing:-0.301px;">7</div>
<div class="t" style="left:80.00px;top:137.22px;font-size:14.2px;line-height:20px;color:#f8f8f2;font-family:'Liberation Mono',monospace;white-space:pre;letter-spacing:-0.301px;"><span style="color:#ff79c6">bool</span><span style="color:#f8f8f2"> </span><span style="color:#50fa7b">upperLimitReached</span></div>
</div>
<div class="a" style="left:652px;top:491.3px;width:917px;height:916.2px;background:#282a36;border-bottom-left-radius:3px;border-top-left-radius:2px;overflow:hidden">
<div class="t" style="left:15.34px;top:-7.08px;font-size:14.2px;line-height:20px;color:#7c8e8c;font-family:'Liberation Mono',monospace;white-space:pre;letter-spacing:-0.301px;">234</div>
<div class="t" style="left:81.00px;top:-7.08px;font-size:14.2px;line-height:20px;color:#f8f8f2;font-family:'Liberation Mono',monospace;white-space:pre;letter-spacing:-0.301px;"><span style="color:#f8f8f2">  </span><span style="color:#50fa7b">logger</span><span style="color:#ff79c6">-&gt;</span><span style="color:#50fa7b">log</span><span style="color:#f8f8f2">(</span><span style="color:#f1fa8c">"DEBUG"</span><span style="color:#f8f8f2">,</span><span style="color:#f8f8f2"> </span><span style="color:#f1fa8c">"Exiting armController::Opening_PB_StateFunc"</span><span style="color:#f8f8f2">)</span><span style="color:#f8f8f2">;</span></div>
<div class="t" style="left:15.34px;top:13.92px;font-size:14.2px;line-height:20px;color:#7c8e8c;font-family:'Liberation Mono',monospace;white-space:pre;letter-spacing:-0.301px;">235</div>
<div class="t" style="left:81.00px;top:13.92px;font-size:14.2px;line-height:20px;color:#f8f8f2;font-family:'Liberation Mono',monospace;white-space:pre;letter-spacing:-0.301px;"><span style="color:#f8f8f2">}</span></div>
<div class="t" style="left:15.34px;top:34.92px;font-size:14.2px;line-height:20px;color:#7c8e8c;font-family:'Liberation Mono',monospace;white-space:pre;letter-spacing:-0.301px;">236</div>
<div class="t" style="left:15.34px;top:55.92px;font-size:14.2px;line-height:20px;color:#7c8e8c;font-family:'Liberation Mono',monospace;white-space:pre;letter-spacing:-0.301px;">237</div>
<div class="t" style="left:81.00px;top:55.92px;font-size:14.2px;line-height:20px;color:#f8f8f2;font-family:'Liberation Mono',monospace;white-space:pre;letter-spacing:-0.301px;"><span style="color:#ffb86c">void</span><span style="color:#f8f8f2"> </span><span style="color:#50fa7b">armController</span><span style="color:#50fa7b">::</span><span style="color:#50fa7b">Finding_Sample_StateFunc</span><span style="color:#f8f8f2">(</span><span style="color:#f8f8f2">)</span></div>
<div class="t" style="left:15.34px;top:76.92px;font-size:14.2px;line-height:20px;color:#7c8e8c;font-family:'Liberation Mono',monospace;white-space:pre;letter-spacing:-0.301px;">238</div>
<svg class="a" style="left:46px;top:83.69999999999999px;" width="7" height="6" viewBox="0 0 7 6"><path d="M0 0h6.5L3.25 5z" fill="#8a9394"/></svg>
<div class="t" style="left:81.00px;top:76.92px;font-size:14.2px;line-height:20px;color:#f8f8f2;font-family:'Liberation Mono',monospace;white-space:pre;letter-spacing:-0.301px;"><span style="color:#f8f8f2">{</span></div>
<div class="t" style="left:15.34px;top:97.92px;font-size:14.2px;line-height:20px;color:#7c8e8c;font-family:'Liberation Mono',monospace;white-space:pre;letter-spacing:-0.301px;">239</div>
<div class="t" style="left:81.00px;top:97.92px;font-size:14.2px;line-height:20px;color:#f8f8f2;font-family:'Liberation Mono',monospace;white-space:pre;letter-spacing:-0.301px;"><span style="color:#f8f8f2">  </span><span style="color:#50fa7b">logger</span><span style="color:#ff79c6">-&gt;</span><span style="color:#50fa7b">log</span><span style="color:#f8f8f2">(</span><span style="color:#f1fa8c">"DEBUG"</span><span style="color:#f8f8f2">,</span><span style="color:#f8f8f2"> </span><span style="color:#f1fa8c">"Entering armController::Finding_Sample_StateFunc"</span><span style="color:#f8f8f2">)</span><span style="color:#f8f8f2">;</span></div>
<div class="t" style="left:15.34px;top:118.92px;font-size:14.2px;line-height:20px;color:#7c8e8c;font-family:'Liberation Mono',monospace;white-space:pre;letter-spacing:-0.301px;">240</div>
<div class="t" style="left:81.00px;top:118.92px;font-size:14.2px;line-height:20px;color:#f8f8f2;font-family:'Liberation Mono',monospace;white-space:pre;letter-spacing:-0.301px;"><span style="color:#f8f8f2">  </span><span style="color:#6272a4">// initialize static members for initial values of this state</span></div>
<div class="t" style="left:15.34px;top:139.92px;font-size:14.2px;line-height:20px;color:#7c8e8c;font-family:'Liberation Mono',monospace;white-space:pre;letter-spacing:-0.301px;">241</div>
<div class="t" style="left:81.00px;top:139.92px;font-size:14.2px;line-height:20px;color:#f8f8f2;font-family:'Liberation Mono',monospace;white-space:pre;letter-spacing:-0.301px;"><span style="color:#f8f8f2">  </span><span style="color:#6272a4">//   e.g. where the search starts, what the goals of the state are, etc.</span></div>
<div class="t" style="left:15.34px;top:160.92px;font-size:14.2px;line-height:20px;color:#7c8e8c;font-family:'Liberation Mono',monospace;white-space:pre;letter-spacing:-0.301px;">242</div>
<svg class="a" style="left:46px;top:167.7px;" width="7" height="6" viewBox="0 0 7 6"><path d="M0 0h6.5L3.25 5z" fill="#8a9394"/></svg>
<div class="t" style="left:81.00px;top:160.92px;font-size:14.2px;line-height:20px;color:#f8f8f2;font-family:'Liberation Mono',monospace;white-space:pre;letter-spacing:-0.301px;"><span style="color:#f8f8f2">  </span><span style="color:#ff79c6">static</span><span style="color:#f8f8f2"> </span><span style="color:#ffb86c">float</span><span style="color:#f8f8f2"> </span><span style="color:#50fa7b">startSearchArmRotation</span><span style="color:#f8f8f2"> </span><span style="color:#ff79c6">=</span><span style="color:#f8f8f2"> </span><span style="color:#50fa7b">config</span><span style="color:#f8f8f2">[</span><span style="color:#f1fa8c">"User Configuration"</span><span style="color:#f8f8f2">]</span><span style="color:#f8f8f2">[</span><span style="color:#f1fa8c">"search"</span><span style="color:#f8f8f2">]</span><span style="color:#f8f8f2">[</span><span style="color:#f1fa8c">"sample"</span><span style="color:#f8f8f2">]</span><span style="color:#f8f8f2">[</span><span style="color:#f1fa8c">"angle"</span><span style="color:#f8f8f2">]</span><span style="color:#50fa7b">.</span><span style="color:#50fa7b">asFloat</span><span style="color:#f8f8f2">(</span><span style="color:#f8f8f2">)</span><span style="color:#f8f8f2">;</span></div>
<div class="t" style="left:15.34px;top:181.92px;font-size:14.2px;line-height:20px;color:#7c8e8c;font-family:'Liberation Mono',monospace;white-space:pre;letter-spacing:-0.301px;">243</div>
<div class="t" style="left:81.00px;top:181.92px;font-size:14.2px;line-height:20px;color:#f8f8f2;font-family:'Liberation Mono',monospace;white-space:pre;letter-spacing:-0.301px;"><span style="color:#f8f8f2">  </span><span style="color:#ff79c6">static</span><span style="color:#f8f8f2"> </span><span style="color:#ffb86c">float</span><span style="color:#f8f8f2"> </span><span style="color:#50fa7b">initRadialPos</span><span style="color:#f8f8f2">       </span><span style="color:#ff79c6">=</span><span style="color:#f8f8f2"> </span><span style="color:#f8f8f2">(</span><span style="color:#50fa7b">maxRadialPos</span><span style="color:#f8f8f2"> </span><span style="color:#ff79c6">+</span><span style="color:#f8f8f2"> </span><span style="color:#50fa7b">minRadialPos</span><span style="color:#f8f8f2">)</span><span style="color:#f8f8f2"> </span><span style="color:#ff79c6">*</span><span style="color:#f8f8f2"> </span><span style="color:#bd93f9">3.0f</span><span style="color:#f8f8f2"> </span><span style="color:#ff79c6">/</span><span style="color:#f8f8f2"> </span><span style="color:#bd93f9">4.0f</span><span style="color:#f8f8f2">;</span></div>
<div class="t" style="left:15.34px;top:202.92px;font-size:14.2px;line-height:20px;color:#7c8e8c;font-family:'Liberation Mono',monospace;white-space:pre;letter-spacing:-0.301px;">244</div>
<div class="t" style="left:81.00px;top:202.92px;font-size:14.2px;line-height:20px;color:#f8f8f2;font-family:'Liberation Mono',monospace;white-space:pre;letter-spacing:-0.301px;"><span style="color:#f8f8f2">  </span><span style="color:#ff79c6">static</span><span style="color:#f8f8f2"> </span><span style="color:#ffb86c">float</span><span style="color:#f8f8f2"> </span><span style="color:#50fa7b">initVerticalPos</span><span style="color:#f8f8f2">     </span><span style="color:#ff79c6">=</span><span style="color:#f8f8f2"> </span><span style="color:#bd93f9">311000</span><span style="color:#f8f8f2">;</span><span style="color:#6272a4">//minVerticalPos + 50000;</span></div>
<div class="t" style="left:15.34px;top:223.92px;font-size:14.2px;line-height:20px;color:#7c8e8c;font-family:'Liberation Mono',monospace;white-space:pre;letter-spacing:-0.301px;">245</div>
<div class="t" style="left:81.00px;top:223.92px;font-size:14.2px;line-height:20px;color:#f8f8f2;font-family:'Liberation Mono',monospace;white-space:pre;letter-spacing:-0.301px;"><span style="color:#f8f8f2">  </span><span style="color:#ff79c6">static</span><span style="color:#f8f8f2"> </span><span style="color:#ffb86c">float</span><span style="color:#f8f8f2"> </span><span style="color:#50fa7b">initArmRotation</span><span style="color:#f8f8f2">     </span><span style="color:#ff79c6">=</span><span style="color:#f8f8f2"> </span><span style="color:#50fa7b">startSearchArmRotation</span><span style="color:#f8f8f2">;</span></div>
<div class="t" style="left:15.34px;top:244.92px;font-size:14.2px;line-height:20px;color:#7c8e8c;font-family:'Liberation Mono',monospace;white-space:pre;letter-spacing:-0.301px;">246</div>
<div class="t" style="left:81.00px;top:244.92px;font-size:14.2px;line-height:20px;color:#f8f8f2;font-family:'Liberation Mono',monospace;white-space:pre;letter-spacing:-0.301px;"><span style="color:#f8f8f2">  </span><span style="color:#ff79c6">static</span><span style="color:#f8f8f2"> </span><span style="color:#ffb86c">float</span><span style="color:#f8f8f2"> </span><span style="color:#50fa7b">initGripperRotation</span><span style="color:#f8f8f2"> </span><span style="color:#ff79c6">=</span><span style="color:#f8f8f2"> </span><span style="color:#50fa7b">gripperRotationSafe</span><span style="color:#f8f8f2">;</span></div>
<div class="t" style="left:15.34px;top:265.92px;font-size:14.2px;line-height:20px;color:#7c8e8c;font-family:'Liberation Mono',monospace;white-space:pre;letter-spacing:-0.301px;">247</div>
<div class="t" style="left:81.00px;top:265.92px;font-size:14.2px;line-height:20px;color:#f8f8f2;font-family:'Liberation Mono',monospace;white-space:pre;letter-spacing:-0.301px;"><span style="color:#f8f8f2">  </span><span style="color:#ff79c6">static</span><span style="color:#f8f8f2"> </span><span style="color:#ffb86c">float</span><span style="color:#f8f8f2"> </span><span style="color:#50fa7b">initGripperPos</span><span style="color:#f8f8f2">      </span><span style="color:#ff79c6">=</span><span style="color:#f8f8f2"> </span><span style="color:#50fa7b">gripperPosSafe</span><span style="color:#f8f8f2">;</span></div>
<div class="t" style="left:15.34px;top:286.92px;font-size:14.2px;line-height:20px;color:#7c8e8c;font-family:'Liberation Mono',monospace;white-space:pre;letter-spacing:-0.301px;">248</div>
<div class="t" style="left:81.00px;top:286.92px;font-size:14.2px;line-height:20px;color:#f8f8f2;font-family:'Liberation Mono',monospace;white-space:pre;letter-spacing:-0.301px;"><span style="color:#f8f8f2">  </span><span style="color:#ff79c6">static</span><span style="color:#f8f8f2"> </span><span style="color:#ffb86c">bool</span><span style="color:#f8f8f2"> </span><span style="color:#50fa7b">firstRun</span><span style="color:#f8f8f2"> </span><span style="color:#ff79c6">=</span><span style="color:#f8f8f2"> </span><span style="color:#bd93f9">true</span><span style="color:#f8f8f2">;</span></div>
<div class="t" style="left:15.34px;top:307.92px;font-size:14.2px;line-height:20px;color:#7c8e8c;font-family:'Liberation Mono',monospace;white-space:pre;letter-spacing:-0.301px;">249</div>
<div class="t" style="left:15.34px;top:328.92px;font-size:14.2px;line-height:20px;color:#7c8e8c;font-family:'Liberation Mono',monospace;white-space:pre;letter-spacing:-0.301px;">250</div>
<div class="t" style="left:81.00px;top:328.92px;font-size:14.2px;line-height:20px;color:#f8f8f2;font-family:'Liberation Mono',monospace;white-space:pre;letter-spacing:-0.301px;"><span style="color:#f8f8f2">  </span><span style="color:#ff79c6">if</span><span style="color:#f8f8f2"> </span><span style="color:#f8f8f2">(</span><span style="color:#50fa7b">firstRun</span><span style="color:#f8f8f2">)</span></div>
<div class="t" style="left:15.34px;top:349.92px;font-size:14.2px;line-height:20px;color:#7c8e8c;font-family:'Liberation Mono',monospace;white-space:pre;letter-spacing:-0.301px;">251</div>
<svg class="a" style="left:46px;top:356.7px;" width="7" height="6" viewBox="0 0 7 6"><path d="M0 0h6.5L3.25 5z" fill="#8a9394"/></svg>
<div class="t" style="left:81.00px;top:349.92px;font-size:14.2px;line-height:20px;color:#f8f8f2;font-family:'Liberation Mono',monospace;white-space:pre;letter-spacing:-0.301px;"><span style="color:#f8f8f2">  </span><span style="color:#f8f8f2">{</span></div>
<div class="t" style="left:15.34px;top:370.92px;font-size:14.2px;line-height:20px;color:#7c8e8c;font-family:'Liberation Mono',monospace;white-space:pre;letter-spacing:-0.301px;">252</div>
<div class="t" style="left:81.00px;top:370.92px;font-size:14.2px;line-height:20px;color:#f8f8f2;font-family:'Liberation Mono',monospace;white-space:pre;letter-spacing:-0.301px;"><span style="color:#f8f8f2">    </span><span style="color:#50fa7b">goalRadialPos</span><span style="color:#f8f8f2"> </span><span style="color:#ff79c6">=</span><span style="color:#f8f8f2"> </span><span style="color:#50fa7b">initRadialPos</span><span style="color:#f8f8f2">;</span></div>
<div class="t" style="left:15.34px;top:391.92px;font-size:14.2px;line-height:20px;color:#7c8e8c;font-family:'Liberation Mono',monospace;white-space:pre;letter-spacing:-0.301px;">253</div>
<div class="t" style="left:81.00px;top:391.92px;font-size:14.2px;line-height:20px;color:#f8f8f2;font-family:'Liberation Mono',monospace;white-space:pre;letter-spacing:-0.301px;"><span style="color:#f8f8f2">    </span><span style="color:#50fa7b">goalVerticalPos</span><span style="color:#f8f8f2"> </span><span style="color:#ff79c6">=</span><span style="color:#f8f8f2"> </span><span style="color:#50fa7b">initVerticalPos</span><span style="color:#f8f8f2">;</span></div>
<div class="t" style="left:15.34px;top:412.92px;font-size:14.2px;line-height:20px;color:#7c8e8c;font-family:'Liberation Mono',monospace;white-space:pre;letter-spacing:-0.301px;">254</div>
<div class="t" style="left:81.00px;top:412.92px;font-size:14.2px;line-height:20px;color:#f8f8f2;font-family:'Liberation Mono',monospace;white-space:pre;letter-spacing:-0.301px;"><span style="color:#f8f8f2">    </span><span style="color:#50fa7b">goalArmRotation</span><span style="color:#f8f8f2"> </span><span style="color:#ff79c6">=</span><span style="color:#f8f8f2"> </span><span style="color:#50fa7b">initArmRotation</span><span style="color:#f8f8f2">;</span></div>
<div class="t" style="left:15.34px;top:433.92px;font-size:14.2px;line-height:20px;color:#7c8e8c;font-family:'Liberation Mono',monospace;white-space:pre;letter-spacing:-0.301px;">255</div>
<div class="t" style="left:81.00px;top:433.92px;font-size:14.2px;line-height:20px;color:#f8f8f2;font-family:'Liberation Mono',monospace;white-space:pre;letter-spacing:-0.301px;"><span style="color:#f8f8f2">    </span><span style="color:#50fa7b">goalGripperRotation</span><span style="color:#f8f8f2"> </span><span style="color:#ff79c6">=</span><span style="color:#f8f8f2"> </span><span style="color:#50fa7b">initGripperRotation</span><span style="color:#f8f8f2">;</span></div>
<div class="t" style="left:15.34px;top:454.92px;font-size:14.2px;line-height:20px;color:#7c8e8c;font-family:'Liberation Mono',monospace;white-space:pre;letter-spacing:-0.301px;">256</div>
<div class="t" style="left:81.00px;top:454.92px;font-size:14.2px;line-height:20px;color:#f8f8f2;font-family:'Liberation Mono',monospace;white-space:pre;letter-spacing:-0.301px;"><span style="color:#f8f8f2">    </span><span style="color:#50fa7b">goalGripperPos</span><span style="color:#f8f8f2"> </span><span style="color:#ff79c6">=</span><span style="color:#f8f8f2"> </span><span style="color:#50fa7b">initGripperPos</span><span style="color:#f8f8f2">;</span></div>
<div class="t" style="left:15.34px;top:475.92px;font-size:14.2px;line-height:20px;color:#7c8e8c;font-family:'Liberation Mono',monospace;white-space:pre;letter-spacing:-0.301px;">257</div>
<div class="t" style="left:81.00px;top:475.92px;font-size:14.2px;line-height:20px;color:#f8f8f2;font-family:'Liberation Mono',monospace;white-space:pre;letter-spacing:-0.301px;"><span style="color:#f8f8f2">    </span><span style="color:#50fa7b">firstRun</span><span style="color:#f8f8f2"> </span><span style="color:#ff79c6">=</span><span style="color:#f8f8f2"> </span><span style="color:#bd93f9">false</span><span style="color:#f8f8f2">;</span></div>
<div class="t" style="left:15.34px;top:496.92px;font-size:14.2px;line-height:20px;color:#7c8e8c;font-family:'Liberation Mono',monospace;white-space:pre;letter-spacing:-0.301px;">258</div>
<div class="t" style="left:81.00px;top:496.92px;font-size:14.2px;line-height:20px;color:#f8f8f2;font-family:'Liberation Mono',monospace;white-space:pre;letter-spacing:-0.301px;"><span style="color:#f8f8f2">    </span><span style="color:#ff79c6">return</span><span style="color:#f8f8f2">;</span></div>
<div class="t" style="left:15.34px;top:517.92px;font-size:14.2px;line-height:20px;color:#7c8e8c;font-family:'Liberation Mono',monospace;white-space:pre;letter-spacing:-0.301px;">259</div>
<div class="t" style="left:81.00px;top:517.92px;font-size:14.2px;line-height:20px;color:#f8f8f2;font-family:'Liberation Mono',monospace;white-space:pre;letter-spacing:-0.301px;"><span style="color:#f8f8f2">  </span><span style="color:#f8f8f2">}</span></div>
<div class="t" style="left:15.34px;top:538.92px;font-size:14.2px;line-height:20px;color:#7c8e8c;font-family:'Liberation Mono',monospace;white-space:pre;letter-spacing:-0.301px;">260</div>
<div class="t" style="left:15.34px;top:559.92px;font-size:14.2px;line-height:20px;color:#7c8e8c;font-family:'Liberation Mono',monospace;white-space:pre;letter-spacing:-0.301px;">261</div>
<div class="t" style="left:81.00px;top:559.92px;font-size:14.2px;line-height:20px;color:#f8f8f2;font-family:'Liberation Mono',monospace;white-space:pre;letter-spacing:-0.301px;"><span style="color:#f8f8f2">  </span><span style="color:#ff79c6">static</span><span style="color:#f8f8f2"> </span><span style="color:#ffb86c">float</span><span style="color:#f8f8f2"> </span><span style="color:#50fa7b">maxSearchTime</span><span style="color:#f8f8f2"> </span><span style="color:#ff79c6">=</span><span style="color:#f8f8f2"> </span><span style="color:#bd93f9">300.0f</span><span style="color:#f8f8f2">;</span><span style="color:#f8f8f2"> </span><span style="color:#6272a4">// seconds we are allowed to search</span></div>
<div class="t" style="left:15.34px;top:580.92px;font-size:14.2px;line-height:20px;color:#7c8e8c;font-family:'Liberation Mono',monospace;white-space:pre;letter-spacing:-0.301px;">262</div>
<div class="t" style="left:15.34px;top:601.92px;font-size:14.2px;line-height:20px;color:#7c8e8c;font-family:'Liberation Mono',monospace;white-space:pre;letter-spacing:-0.301px;">263</div>
<svg class="a" style="left:46px;top:608.7px;" width="7" height="6" viewBox="0 0 7 6"><path d="M0 0h6.5L3.25 5z" fill="#8a9394"/></svg>
<div class="t" style="left:81.00px;top:601.92px;font-size:14.2px;line-height:20px;color:#f8f8f2;font-family:'Liberation Mono',monospace;white-space:pre;letter-spacing:-0.301px;"><span style="color:#f8f8f2">  </span><span style="color:#ff79c6">static</span><span style="color:#f8f8f2"> </span><span style="color:#ffb86c">float</span><span style="color:#f8f8f2"> </span><span style="color:#50fa7b">armRotationStep</span><span style="color:#f8f8f2"> </span><span style="color:#ff79c6">=</span><span style="color:#f8f8f2"> </span><span style="color:#50fa7b">config</span><span style="color:#f8f8f2">[</span><span style="color:#f1fa8c">"User Configuration"</span><span style="color:#f8f8f2">]</span><span style="color:#f8f8f2">[</span><span style="color:#f1fa8c">"search"</span><span style="color:#f8f8f2">]</span><span style="color:#f8f8f2">[</span><span style="color:#f1fa8c">"sample"</span><span style="color:#f8f8f2">]</span><span style="color:#f8f8f2">[</span><span style="color:#f1fa8c">"step"</span><span style="color:#f8f8f2">]</span><span style="color:#50fa7b">.</span><span style="color:#50fa7b">asFloat</span><span style="color:#f8f8f2">(</span><span style="color:#f8f8f2">)</span><span style="color:#f8f8f2">;</span></div>
<div class="t" style="left:15.34px;top:622.92px;font-size:14.2px;line-height:20px;color:#7c8e8c;font-family:'Liberation Mono',monospace;white-space:pre;letter-spacing:-0.301px;">264</div>
<div class="t" style="left:81.00px;top:622.92px;font-size:14.2px;line-height:20px;color:#f8f8f2;font-family:'Liberation Mono',monospace;white-space:pre;letter-spacing:-0.301px;"><span style="color:#f8f8f2">  </span><span style="color:#ff79c6">static</span><span style="color:#f8f8f2"> </span><span style="color:#ffb86c">float</span><span style="color:#f8f8f2"> </span><span style="color:#50fa7b">radialPosStep</span><span style="color:#f8f8f2"> </span><span style="color:#ff79c6">=</span><span style="color:#f8f8f2"> </span><span style="color:#bd93f9">10000.0f</span><span style="color:#f8f8f2">;</span><span style="color:#f8f8f2">    </span><span style="color:#6272a4">// amount to move by in radius</span></div>
<div class="t" style="left:15.34px;top:643.92px;font-size:14.2px;line-height:20px;color:#7c8e8c;font-family:'Liberation Mono',monospace;white-space:pre;letter-spacing:-0.301px;">265</div>
<div class="t" style="left:81.00px;top:643.92px;font-size:14.2px;line-height:20px;color:#f8f8f2;font-family:'Liberation Mono',monospace;white-space:pre;letter-spacing:-0.301px;"><span style="color:#f8f8f2">  </span><span style="color:#ff79c6">static</span><span style="color:#f8f8f2"> </span><span style="color:#ffb86c">float</span><span style="color:#f8f8f2"> </span><span style="color:#50fa7b">armRotationScale</span><span style="color:#f8f8f2"> </span><span style="color:#ff79c6">=</span><span style="color:#f8f8f2"> </span><span style="color:#bd93f9">1.0f</span><span style="color:#ff79c6">/</span><span style="color:#bd93f9">150.0f</span><span style="color:#f8f8f2">;</span><span style="color:#f8f8f2">  </span><span style="color:#6272a4">// amount to move by in theta based on image space</span></div>
<div class="t" style="left:15.34px;top:664.92px;font-size:14.2px;line-height:20px;color:#7c8e8c;font-family:'Liberation Mono',monospace;white-space:pre;letter-spacing:-0.301px;">266</div>
<div class="t" style="left:81.00px;top:664.92px;font-size:14.2px;line-height:20px;color:#f8f8f2;font-family:'Liberation Mono',monospace;white-space:pre;letter-spacing:-0.301px;"><span style="color:#f8f8f2">  </span><span style="color:#ff79c6">static</span><span style="color:#f8f8f2"> </span><span style="color:#ffb86c">float</span><span style="color:#f8f8f2"> </span><span style="color:#50fa7b">radialPosScale</span><span style="color:#f8f8f2"> </span><span style="color:#ff79c6">=</span><span style="color:#f8f8f2"> </span><span style="color:#bd93f9">100.0f</span><span style="color:#f8f8f2">;</span><span style="color:#f8f8f2">         </span><span style="color:#6272a4">// amount to move by in radius based on image space</span></div>
<div class="t" style="left:15.34px;top:685.92px;font-size:14.2px;line-height:20px;color:#7c8e8c;font-family:'Liberation Mono',monospace;white-space:pre;letter-spacing:-0.301px;">267</div>
<div class="t" style="left:15.34px;top:706.92px;font-size:14.2px;line-height:20px;color:#7c8e8c;font-family:'Liberation Mono',monospace;white-space:pre;letter-spacing:-0.301px;">268</div>
<div class="t" style="left:81.00px;top:706.92px;font-size:14.2px;line-height:20px;color:#f8f8f2;font-family:'Liberation Mono',monospace;white-space:pre;letter-spacing:-0.301px;"><span style="color:#f8f8f2">  </span><span style="color:#ff79c6">static</span><span style="color:#f8f8f2"> </span><span style="color:#ffb86c">float</span><span style="color:#f8f8f2"> </span><span style="color:#50fa7b">positionRadius</span><span style="color:#f8f8f2"> </span><span style="color:#ff79c6">=</span><span style="color:#f8f8f2"> </span><span style="color:#bd93f9">50.0f</span><span style="color:#f8f8f2">;</span><span style="color:#f8f8f2"> </span><span style="color:#6272a4">// once center of sample is in this radius, we are done</span></div>
<div class="t" style="left:15.34px;top:727.92px;font-size:14.2px;line-height:20px;color:#7c8e8c;font-family:'Liberation Mono',monospace;white-space:pre;letter-spacing:-0.301px;">269</div>
<div class="t" style="left:15.34px;top:748.92px;font-size:14.2px;line-height:20px;color:#7c8e8c;font-family:'Liberation Mono',monospace;white-space:pre;letter-spacing:-0.301px;">270</div>
<div class="t" style="left:81.00px;top:748.92px;font-size:14.2px;line-height:20px;color:#f8f8f2;font-family:'Liberation Mono',monospace;white-space:pre;letter-spacing:-0.301px;"><span style="color:#f8f8f2">  </span><span style="color:#ff79c6">static</span><span style="color:#f8f8f2"> </span><span style="color:#ffb86c">bool</span><span style="color:#f8f8f2"> </span><span style="color:#50fa7b">foundSample</span><span style="color:#f8f8f2"> </span><span style="color:#ff79c6">=</span><span style="color:#f8f8f2"> </span><span style="color:#bd93f9">false</span><span style="color:#f8f8f2">;</span></div>
<div class="t" style="left:15.34px;top:769.92px;font-size:14.2px;line-height:20px;color:#7c8e8c;font-family:'Liberation Mono',monospace;white-space:pre;letter-spacing:-0.301px;">271</div>
<div class="t" style="left:81.00px;top:769.92px;font-size:14.2px;line-height:20px;color:#f8f8f2;font-family:'Liberation Mono',monospace;white-space:pre;letter-spacing:-0.301px;"><span style="color:#f8f8f2">  </span><span style="color:#ff79c6">static</span><span style="color:#f8f8f2"> </span><span style="color:#50fa7b">high_level_controller</span><span style="color:#50fa7b">::</span><span style="color:#50fa7b">sampleState</span><span style="color:#f8f8f2"> </span><span style="color:#50fa7b">internalSampleState</span><span style="color:#f8f8f2">;</span><span style="color:#f8f8f2"> </span><span style="color:#6272a4">// used within this state; global state</span></div>
<div class="t" style="left:15.34px;top:790.92px;font-size:14.2px;line-height:20px;color:#7c8e8c;font-family:'Liberation Mono',monospace;white-space:pre;letter-spacing:-0.301px;">272</div>
<div class="t" style="left:81.00px;top:790.92px;font-size:14.2px;line-height:20px;color:#f8f8f2;font-family:'Liberation Mono',monospace;white-space:pre;letter-spacing:-0.301px;"><span style="color:#f8f8f2">  </span><span style="color:#ff79c6">static</span><span style="color:#f8f8f2"> </span><span style="color:#ffb86c">float</span><span style="color:#f8f8f2"> </span><span style="color:#50fa7b">sX</span><span style="color:#f8f8f2">,</span><span style="color:#f8f8f2"> </span><span style="color:#50fa7b">sY</span><span style="color:#f8f8f2">;</span><span style="color:#f8f8f2"> </span><span style="color:#6272a4">// image-space position of sample</span></div>
<div class="t" style="left:15.34px;top:811.92px;font-size:14.2px;line-height:20px;color:#7c8e8c;font-family:'Liberation Mono',monospace;white-space:pre;letter-spacing:-0.301px;">273</div>
<div class="t" style="left:15.34px;top:832.92px;font-size:14.2px;line-height:20px;color:#7c8e8c;font-family:'Liberation Mono',monospace;white-space:pre;letter-spacing:-0.301px;">274</div>
<div class="t" style="left:81.00px;top:832.92px;font-size:14.2px;line-height:20px;color:#f8f8f2;font-family:'Liberation Mono',monospace;white-space:pre;letter-spacing:-0.301px;"><span style="color:#f8f8f2">  </span><span style="color:#6272a4">// perform any image processing required using the detector</span></div>
<div class="t" style="left:15.34px;top:853.92px;font-size:14.2px;line-height:20px;color:#7c8e8c;font-family:'Liberation Mono',monospace;white-space:pre;letter-spacing:-0.301px;">275</div>
<div class="t" style="left:81.00px;top:853.92px;font-size:14.2px;line-height:20px;color:#f8f8f2;font-family:'Liberation Mono',monospace;white-space:pre;letter-spacing:-0.301px;"><span style="color:#f8f8f2">  </span><span style="color:#6272a4">// update the arm's goal variables based on the result of the image processing</span></div>
<div class="t" style="left:15.34px;top:874.92px;font-size:14.2px;line-height:20px;color:#7c8e8c;font-family:'Liberation Mono',monospace;white-space:pre;letter-spacing:-0.301px;">276</div>
<div class="t" style="left:81.00px;top:874.92px;font-size:14.2px;line-height:20px;color:#f8f8f2;font-family:'Liberation Mono',monospace;white-space:pre;letter-spacing:-0.301px;"><span style="color:#f8f8f2">  </span><span style="color:#6272a4">// update the current state of the arm if necessary</span></div>
<div class="t" style="left:15.34px;top:895.92px;font-size:14.2px;line-height:20px;color:#7c8e8c;font-family:'Liberation Mono',monospace;white-space:pre;letter-spacing:-0.301px;">277</div>
</div>
<div class="a" style="left:652px;top:491.3px;width:908px;height:1.6px;background:#282a36;border-top-left-radius:2px"></div>
<div class="a" style="left:1560px;top:491.3px;width:10px;height:916px;background:#efefef"></div>
<div class="a" style="left:1560.5px;top:772px;width:8px;height:54px;background:#cfcfcf;border-radius:3px"></div>
<div class="a" style="left:720px;top:1399px;width:840px;height:8.5px;background:#ffffff"></div>
<div class="a" style="left:720px;top:1399px;width:517px;height:8.5px;background:#d0d0d0"></div>
<div class="a" style="left:1570px;top:185px;width:13px;height:1222.5px;background:#dedede"></div>
<div class="a" style="left:1570px;top:765px;width:13px;height:60px;background:#bcbcbc"></div>
<div class="a" style="left:1583px;top:185px;width:261px;height:1222.5px;background:#f4f4f4"></div>
<div class="t" style="left:1586.50px;top:191.79px;font-size:10.7px;line-height:15px;color:#a5a5a5;letter-spacing:-0.091px;">OBJECT BROWSER</div>
<div class="a" style="left:1583.3px;top:212.3px;width:87.5px;height:30.5px;background:#fff;border:1px solid #c9c9c9;border-bottom:none;border-radius:2px 2px 0 0"></div>
<div class="a" style="left:1670.5px;top:241.3px;width:163px;height:1px;background:#dddddd"></div>
<div class="t" style="left:1588.50px;top:216.85px;font-size:14px;line-height:20px;color:#333;letter-spacing:-0.074px;">Composition</div>
<div class="t" style="left:1678.40px;top:216.85px;font-size:14px;line-height:20px;color:#3d5aa8;letter-spacing:0.066px;">Inheritance</div>
<div class="t" style="left:1762.50px;top:216.85px;font-size:14px;line-height:20px;color:#3d5aa8;letter-spacing:0.033px;">Crosscut</div>
<div class="a" style="left:1583px;top:242.5px;width:251px;height:538.5px;overflow:hidden;background:#f4f4f4">
<svg class="a" style="left:9.999999999999957px;top:15.3px;" width="8" height="8"><use href="#tex"/></svg>
<svg class="a" style="left:27.299999999999955px;top:9.0px;" width="20" height="19"><use href="#prj"/></svg>
<div class="t" style="left:52.30px;top:9.76px;font-size:16px;line-height:22px;color:#111;">Projects</div>
<svg class="a" style="left:29.999999999999957px;top:39.52199999999998px;" width="8" height="8"><use href="#tex"/></svg>
<svg class="a" style="left:47.299999999999955px;top:33.22199999999998px;" width="20" height="19"><use href="#srv"/></svg>
<div class="t" style="left:72.30px;top:33.98px;font-size:16px;line-height:22px;color:#111;">AGSE</div>
<svg class="a" style="left:49.69999999999995px;top:62.94400000000002px;" width="8" height="11"><use href="#tcol"/></svg>
<svg class="a" style="left:67.29999999999995px;top:56.94400000000002px;" width="20" height="20"><use href="#gear"/></svg>
<div class="t" style="left:92.30px;top:58.20px;font-size:16px;line-height:22px;color:#111;">Deployments</div>
<svg class="a" style="left:68.99999999999996px;top:81.166px;" width="16" height="20"><use href="#doc"/></svg>
<div class="t" style="left:92.30px;top:82.42px;font-size:16px;line-height:22px;color:#111;">Documentation</div>
<svg class="a" style="left:49.69999999999995px;top:111.38800000000003px;" width="8" height="11"><use href="#tcol"/></svg>
<svg class="a" style="left:67.29999999999995px;top:105.38800000000003px;" width="20" height="20"><use href="#exp"/></svg>
<div class="t" style="left:92.30px;top:106.64px;font-size:16px;line-height:22px;color:#111;">Experiments</div>
<svg class="a" style="left:49.99999999999996px;top:136.41000000000003px;" width="8" height="8"><use href="#tex"/></svg>
<svg class="a" style="left:67.79999999999995px;top:130.11px;" width="19" height="19"><use href="#flp"/></svg>
<div class="a" style="left:87.69999999999996px;top:130.01000000000002px;width:73.3425px;height:21px;background:#c0e8fa;border:1px solid #90d0f0"></div>
<div class="t" style="left:92.30px;top:130.87px;font-size:16px;line-height:22px;color:#111;">Software</div>
<svg class="a" style="left:88.29999999999995px;top:153.832px;" width="19" height="20"><use href="#pkg"/></svg>
<div class="t" style="left:112.30px;top:155.09px;font-size:16px;line-height:22px;color:#111;">aruco</div>
<svg class="a" style="left:88.29999999999995px;top:178.05399999999997px;" width="19" height="20"><use href="#pkg"/></svg>
<div class="t" style="left:112.30px;top:179.31px;font-size:16px;line-height:22px;color:#111;">bbbeqep</div>
<svg class="a" style="left:88.29999999999995px;top:202.276px;" width="19" height="20"><use href="#pkg"/></svg>
<div class="t" style="left:112.30px;top:203.53px;font-size:16px;line-height:22px;color:#111;">bbbgpio</div>
<svg class="a" style="left:88.29999999999995px;top:226.49800000000005px;" width="19" height="20"><use href="#pkg"/></svg>
<div class="t" style="left:112.30px;top:227.75px;font-size:16px;line-height:22px;color:#111;">dynamixel</div>
<svg class="a" style="left:69.69999999999996px;top:256.72px;" width="8" height="11"><use href="#tcol"/></svg>
<svg class="a" style="left:88.29999999999995px;top:250.72000000000003px;" width="19" height="20"><use href="#bpkg"/></svg>
<div class="t" style="left:112.30px;top:251.98px;font-size:16px;line-height:22px;color:#111;">high_level_controller</div>
<svg class="a" style="left:69.69999999999996px;top:280.942px;" width="8" height="11"><use href="#tcol"/></svg>
<svg class="a" style="left:88.29999999999995px;top:274.942px;" width="19" height="20"><use href="#bpkg"/></svg>
<div class="t" style="left:112.30px;top:276.20px;font-size:16px;line-height:22px;color:#111;">image_processor</div>
<svg class="a" style="left:69.69999999999996px;top:305.164px;" width="8" height="11"><use href="#tcol"/></svg>
<svg class="a" style="left:88.29999999999995px;top:299.164px;" width="19" height="20"><use href="#bpkg"/></svg>
<div class="t" style="left:112.30px;top:300.42px;font-size:16px;line-height:22px;color:#111;">motor_controller</div>
<svg class="a" style="left:88.29999999999995px;top:323.38599999999997px;" width="19" height="20"><use href="#pkg"/></svg>
<div class="t" style="left:112.30px;top:324.64px;font-size:16px;line-height:22px;color:#111;">objecttracker</div>
<svg class="a" style="left:88.29999999999995px;top:347.60799999999995px;" width="18" height="20"><use href="#cab"/></svg>
<div class="t" style="left:112.30px;top:348.86px;font-size:16px;line-height:22px;color:#111;">OpenCV</div>
<svg class="a" style="left:88.29999999999995px;top:371.83000000000004px;" width="18" height="20"><use href="#cab"/></svg>
<div class="t" style="left:112.30px;top:373.09px;font-size:16px;line-height:22px;color:#111;">Video4Linux</div>
<svg class="a" style="left:49.69999999999995px;top:402.052px;" width="8" height="11"><use href="#tcol"/></svg>
<svg class="a" style="left:67.29999999999995px;top:396.052px;" width="20" height="20"><use href="#sysi"/></svg>
<div class="t" style="left:92.30px;top:397.31px;font-size:16px;line-height:22px;color:#111;">Systems</div>
<svg class="a" style="left:29.999999999999957px;top:427.074px;" width="8" height="8"><use href="#tex"/></svg>
<svg class="a" style="left:47.299999999999955px;top:420.774px;" width="20" height="19"><use href="#srv"/></svg>
<div class="t" style="left:72.30px;top:421.53px;font-size:16px;line-height:22px;color:#111;">Introduction to ROSMOD</div>
<svg class="a" style="left:49.69999999999995px;top:450.4960000000001px;" width="8" height="11"><use href="#tcol"/></svg>
<svg class="a" style="left:67.29999999999995px;top:444.4960000000001px;" width="20" height="20"><use href="#gear"/></svg>
<div class="t" style="left:92.30px;top:445.75px;font-size:16px;line-height:22px;color:#111;">Deployments</div>
<svg class="a" style="left:68.99999999999996px;top:468.7180000000001px;" width="16" height="20"><use href="#doc"/></svg>
<div class="t" style="left:92.30px;top:469.97px;font-size:16px;line-height:22px;color:#111;">Documentation</div>
<svg class="a" style="left:49.69999999999995px;top:498.94000000000005px;" width="8" height="11"><use href="#tcol"/></svg>
<svg class="a" style="left:67.29999999999995px;top:492.94000000000005px;" width="20" height="20"><use href="#exp"/></svg>
<div class="t" style="left:92.30px;top:494.20px;font-size:16px;line-height:22px;color:#111;">Experiments</div>
<svg class="a" style="left:49.99999999999996px;top:523.962px;" width="8" height="8"><use href="#tex"/></svg>
<svg class="a" style="left:67.79999999999995px;top:517.662px;" width="19" height="19"><use href="#flp"/></svg>
<div class="t" style="left:92.30px;top:518.42px;font-size:16px;line-height:22px;color:#111;">Software</div>
</div>
<div class="a" style="left:1795.5px;top:244.6px;width:36px;height:26px;background:linear-gradient(#ffffff,#ececec);border:1px solid #c6c6c6;border-radius:3px"></div>
<svg class="a" style="left:1800px;top:249px;" width="28" height="17" viewBox="0 0 28 17"><path d="M5.5 5L2 8.5 5.5 12" fill="none" stroke="#333" stroke-width="1.2"/><path d="M11 1h12" stroke="#222" stroke-width="1.6"/><path d="M11 3.5h12l-4.5 5.5v6.5l-3 1.5V9z" fill="#222"/></svg>
<div class="a" style="left:1834.3px;top:185px;width:9.7px;height:596px;background:#e9e9e9"></div>
<div class="a" style="left:1835.3px;top:215px;width:7.5px;height:330px;background:#bdbdbd;border-radius:4px"></div>
<div class="a" style="left:1583px;top:781px;width:251px;height:11.7px;background:linear-gradient(#f2f2f2,#ebebeb)"></div>
<div class="a" style="left:1586px;top:784px;width:192px;height:6px;background:#bdbdbd;border-radius:3px"></div>
<div class="a" style="left:1583px;top:792.7px;width:261px;height:3.3px;background:#ffffff"></div>
<div class="t" style="left:1586.00px;top:802.79px;font-size:10.7px;line-height:15px;color:#a5a5a5;letter-spacing:0.041px;">PROPERTY EDITOR</div>
<div class="a" style="left:1583.3px;top:823.3px;width:69.2px;height:30.5px;background:#fff;border:1px solid #c9c9c9;border-bottom:none;border-radius:2px 2px 0 0"></div>
<div class="t" style="left:1588.00px;top:827.85px;font-size:14px;line-height:20px;color:#333;letter-spacing:0.036px;">Attributes</div>
<div class="t" style="left:1660.30px;top:827.85px;font-size:14px;line-height:20px;color:#3d5aa8;letter-spacing:0.042px;">Pointers</div>
<div class="t" style="left:1725.30px;top:827.85px;font-size:14px;line-height:20px;color:#3d5aa8;letter-spacing:-0.281px;">Meta</div>
<div class="a" style="left:1583px;top:820px;width:251px;height:40px;overflow:hidden">
<div class="t" style="left:185.30px;top:7.85px;font-size:14px;line-height:20px;color:#3d5aa8;letter-spacing:-0.317px;">Preferences</div>
</div>
<div class="a" style="left:1583px;top:853.4px;width:251px;height:539px;background:#e8e8e8"></div>
<div class="a" style="left:1583px;top:886.8px;width:251px;height:1.2px;background:#f7f7f7"></div>
<div class="a" style="left:1583px;top:920.3px;width:251px;height:1.2px;background:#f7f7f7"></div>
<div class="t" style="left:1590.40px;top:857.95px;font-size:14px;line-height:20px;color:#222;letter-spacing:-0.250px;">GUID</div>
<div class="t" style="left:1686.00px;top:857.95px;font-size:14px;line-height:20px;color:#222;letter-spacing:0.239px;">8c0974bd-12e4-dc5...</div>
<div class="t" style="left:1590.40px;top:892.35px;font-size:14px;line-height:20px;color:#222;letter-spacing:-1.000px;">ID</div>
<div class="t" style="left:1686.00px;top:892.35px;font-size:14px;line-height:20px;color:#222;letter-spacing:0.077px;">/v/k/8/r/V</div>
<div class="t" style="left:1590.40px;top:926.75px;font-size:14px;line-height:20px;color:#222;letter-spacing:-0.053px;">Meta type</div>
<div class="a" style="left:1686px;top:922px;width:143px;height:29.3px;background:#e1e1e1;border-radius:4px"></div>
<div class="t" style="left:1691.50px;top:925.65px;font-size:14px;line-height:20px;color:#3d5aa8;letter-spacing:0.069px;">Component</div>
<div class="a" style="left:1583px;top:954px;width:251px;height:33px;background:#dcdcdc"></div>
<svg class="a" style="left:1587.5px;top:968px;" width="7" height="5" viewBox="0 0 7 5"><path d="M0 0h6.5L3.25 4.5z" fill="#222"/></svg>
<div class="t" style="left:1600.00px;top:960.15px;font-size:14px;line-height:20px;color:#222;letter-spacing:0.036px;">Attributes</div>
<div class="a" style="left:1589.4px;top:1019.6099999999999px;width:244.6px;height:1.2px;background:#f4f4f4"></div>
<div class="t" style="left:1595.40px;top:993.45px;font-size:14px;line-height:20px;color:#222;letter-spacing:-0.079px;">Authors</div>
<svg class="a" style="left:1673px;top:997.0px;" width="14" height="14" viewBox="0 0 14 14"><circle cx="6.5" cy="6.5" r="5.6" fill="none" stroke="#222" stroke-width="1.5"/><path d="M4.3 4.3l4.4 4.4M8.7 4.3L4.3 8.7" stroke="#222" stroke-width="1.5"/></svg>
<div class="a" style="left:1689px;top:992.0px;width:140px;height:22.7px;background:#fff"></div>
<div class="a" style="left:1689px;top:988.80px;width:137px;height:30px;overflow:hidden">
<div class="t" style="left:3.00px;top:4.65px;font-size:14px;line-height:20px;color:#222;"># Auhors</div>
</div>
<div class="a" style="left:1589.4px;top:1053.4199999999998px;width:244.6px;height:1.2px;background:#f4f4f4"></div>
<div class="t" style="left:1595.40px;top:1027.26px;font-size:14px;line-height:20px;color:#222;letter-spacing:0.075px;">Brief Descrip...</div>
<div class="a" style="left:1689px;top:1025.81px;width:140px;height:22.7px;background:#fff"></div>
<div class="a" style="left:1589.4px;top:1087.23px;width:244.6px;height:1.2px;background:#f4f4f4"></div>
<div class="t" style="left:1595.40px;top:1061.07px;font-size:14px;line-height:20px;color:#222;letter-spacing:-0.033px;">Definitions</div>
<svg class="a" style="left:1673px;top:1064.6200000000001px;" width="14" height="14" viewBox="0 0 14 14"><circle cx="6.5" cy="6.5" r="5.6" fill="none" stroke="#222" stroke-width="1.5"/><path d="M4.3 4.3l4.4 4.4M8.7 4.3L4.3 8.7" stroke="#222" stroke-width="1.5"/></svg>
<div class="a" style="left:1689px;top:1059.6200000000001px;width:140px;height:22.7px;background:#fff"></div>
<div class="a" style="left:1689px;top:1056.42px;width:137px;height:30px;overflow:hidden">
<div class="t" style="left:3.00px;top:4.65px;font-size:14px;line-height:20px;color:#222;">const char* openPay</div>
</div>
<div class="a" style="left:1589.4px;top:1121.04px;width:244.6px;height:1.2px;background:#f4f4f4"></div>
<div class="t" style="left:1595.40px;top:1094.88px;font-size:14px;line-height:20px;color:#222;letter-spacing:0.017px;">Destruction</div>
<div class="a" style="left:1689px;top:1093.43px;width:140px;height:22.7px;background:#fff"></div>
<div class="a" style="left:1589.4px;top:1154.85px;width:244.6px;height:1.2px;background:#f4f4f4"></div>
<div class="t" style="left:1595.40px;top:1128.69px;font-size:14px;line-height:20px;color:#222;letter-spacing:0.079px;">Detailed Des...</div>
<div class="a" style="left:1689px;top:1127.24px;width:140px;height:22.7px;background:#fff"></div>
<div class="a" style="left:1589.4px;top:1188.6599999999999px;width:244.6px;height:1.2px;background:#f4f4f4"></div>
<div class="t" style="left:1595.40px;top:1162.50px;font-size:14px;line-height:20px;color:#222;letter-spacing:-0.043px;">Forwards</div>
<svg class="a" style="left:1673px;top:1166.05px;" width="14" height="14" viewBox="0 0 14 14"><circle cx="6.5" cy="6.5" r="5.6" fill="none" stroke="#222" stroke-width="1.5"/><path d="M4.3 4.3l4.4 4.4M8.7 4.3L4.3 8.7" stroke="#222" stroke-width="1.5"/></svg>
<div class="a" style="left:1689px;top:1161.05px;width:140px;height:22.7px;background:#fff"></div>
<div class="a" style="left:1689px;top:1157.85px;width:137px;height:30px;overflow:hidden">
<div class="t" style="left:3.00px;top:4.65px;font-size:14px;line-height:20px;color:#222;">#include "objecttrack</div>
</div>
<div class="a" style="left:1589.4px;top:1222.4699999999998px;width:244.6px;height:1.2px;background:#f4f4f4"></div>
<div class="t" style="left:1595.40px;top:1196.31px;font-size:14px;line-height:20px;color:#222;letter-spacing:0.062px;">Initializat...</div>
<svg class="a" style="left:1673px;top:1199.86px;" width="14" height="14" viewBox="0 0 14 14"><circle cx="6.5" cy="6.5" r="5.6" fill="none" stroke="#222" stroke-width="1.5"/><path d="M4.3 4.3l4.4 4.4M8.7 4.3L4.3 8.7" stroke="#222" stroke-width="1.5"/></svg>
<div class="a" style="left:1689px;top:1194.86px;width:140px;height:22.7px;background:#fff"></div>
<div class="a" style="left:1689px;top:1191.66px;width:137px;height:30px;overflow:hidden">
<div class="t" style="left:3.00px;top:4.65px;font-size:14px;line-height:20px;color:#222;">paused = true;usingS</div>
</div>
<div class="a" style="left:1589.4px;top:1256.28px;width:244.6px;height:1.2px;background:#f4f4f4"></div>
<div class="t" style="left:1595.40px;top:1230.12px;font-size:14px;line-height:20px;color:#222;letter-spacing:0.088px;">Logging_Tra...</div>
<div class="a" style="left:1689.5px;top:1233.17px;width:86px;height:21.2px;background:linear-gradient(#fdfdfd,#e6e6e6);border:1px solid #bdbdbd;border-radius:3px"></div>
<div class="a" style="left:1731px;top:1234.17px;width:43.5px;height:19.2px;background:#e3e3e3;border-left:1px solid #c4c4c4"></div>
<div class="t" style="left:1737.00px;top:1235.16px;font-size:11px;line-height:15px;color:#555;font-weight:bold;letter-spacing:-0.490px;">FALSE</div>
<div class="a" style="left:1589.4px;top:1290.09px;width:244.6px;height:1.2px;background:#f4f4f4"></div>
<div class="a" style="left:1587.8px;top:1258.28px;width:4.2px;height:33.4px;background:#826a86"></div>
<div class="t" style="left:1595.40px;top:1263.93px;font-size:14px;line-height:20px;color:#222;letter-spacing:0.088px;">Logging_Tra...</div>
<div class="a" style="left:1689px;top:1262.48px;width:140px;height:22.7px;background:#fff"></div>
<div class="a" style="left:1689px;top:1259.28px;width:137px;height:30px;overflow:hidden">
<div class="t" style="left:3.00px;top:4.65px;font-size:14px;line-height:20px;color:#222;">1000</div>
</div>
<div class="a" style="left:1589.4px;top:1323.8999999999999px;width:244.6px;height:1.2px;background:#f4f4f4"></div>
<div class="t" style="left:1595.40px;top:1297.74px;font-size:14px;line-height:20px;color:#222;letter-spacing:0.047px;">Logging_Us...</div>
<div class="a" style="left:1689.5px;top:1300.79px;width:86px;height:21.2px;background:linear-gradient(#fdfdfd,#e6e6e6);border:1px solid #bdbdbd;border-radius:3px"></div>
<div class="a" style="left:1731px;top:1301.79px;width:43.5px;height:19.2px;background:#e3e3e3;border-left:1px solid #c4c4c4"></div>
<div class="t" style="left:1737.00px;top:1302.78px;font-size:11px;line-height:15px;color:#555;font-weight:bold;letter-spacing:-0.490px;">FALSE</div>
<div class="a" style="left:1589.4px;top:1357.71px;width:244.6px;height:1.2px;background:#f4f4f4"></div>
<div class="a" style="left:1587.8px;top:1325.9px;width:4.2px;height:33.4px;background:#826a86"></div>
<div class="t" style="left:1595.40px;top:1331.55px;font-size:14px;line-height:20px;color:#222;letter-spacing:0.047px;">Logging_Us...</div>
<div class="a" style="left:1689px;top:1330.1000000000001px;width:140px;height:22.7px;background:#fff"></div>
<div class="a" style="left:1689px;top:1326.90px;width:137px;height:30px;overflow:hidden">
<div class="t" style="left:3.00px;top:4.65px;font-size:14px;line-height:20px;color:#222;">1000</div>
</div>
<div class="a" style="left:1589.4px;top:1391.52px;width:244.6px;height:1.2px;background:#f4f4f4"></div>
<div class="t" style="left:1595.40px;top:1365.36px;font-size:14px;line-height:20px;color:#222;letter-spacing:-0.192px;">Members</div>
<svg class="a" style="left:1673px;top:1368.91px;" width="14" height="14" viewBox="0 0 14 14"><circle cx="6.5" cy="6.5" r="5.6" fill="none" stroke="#222" stroke-width="1.5"/><path d="M4.3 4.3l4.4 4.4M8.7 4.3L4.3 8.7" stroke="#222" stroke-width="1.5"/></svg>
<div class="a" style="left:1689px;top:1363.91px;width:140px;height:22.7px;background:#fff"></div>
<div class="a" style="left:1689px;top:1360.71px;width:137px;height:30px;overflow:hidden">
<div class="t" style="left:3.00px;top:4.65px;font-size:14px;line-height:20px;color:#222;">bool paused;bool usi</div>
</div>
<div class="a" style="left:1834.6px;top:853px;width:9.4px;height:540px;background:#e9e9e9"></div>
<div class="a" style="left:1835.6px;top:826px;width:7.5px;height:452px;background:#bdbdbd;border-radius:4px"></div>
<div class="a" style="left:1583px;top:1392.4px;width:251px;height:15px;background:#fff"></div>
<div class="a" style="left:1583px;top:1392.4px;width:251px;height:10px;background:linear-gradient(#f2f2f2,#ebebeb)"></div>
<div class="a" style="left:1586px;top:1395px;width:227px;height:6px;background:#bdbdbd;border-radius:3px"></div>
<div class="a" style="left:0px;top:0px;width:1px;height:1442px;background:#1a7fa9"></div>
<div class="a" style="left:1844px;top:0px;width:1px;height:1442px;background:#1a7fa9"></div>
<div class="a" style="left:0px;top:1441px;width:1845px;height:1px;background:#1a7fa9"></div>
<div class="a" style="left:0px;top:0px;width:1845px;height:1px;background:#1a7fa9"></div></body></html>
